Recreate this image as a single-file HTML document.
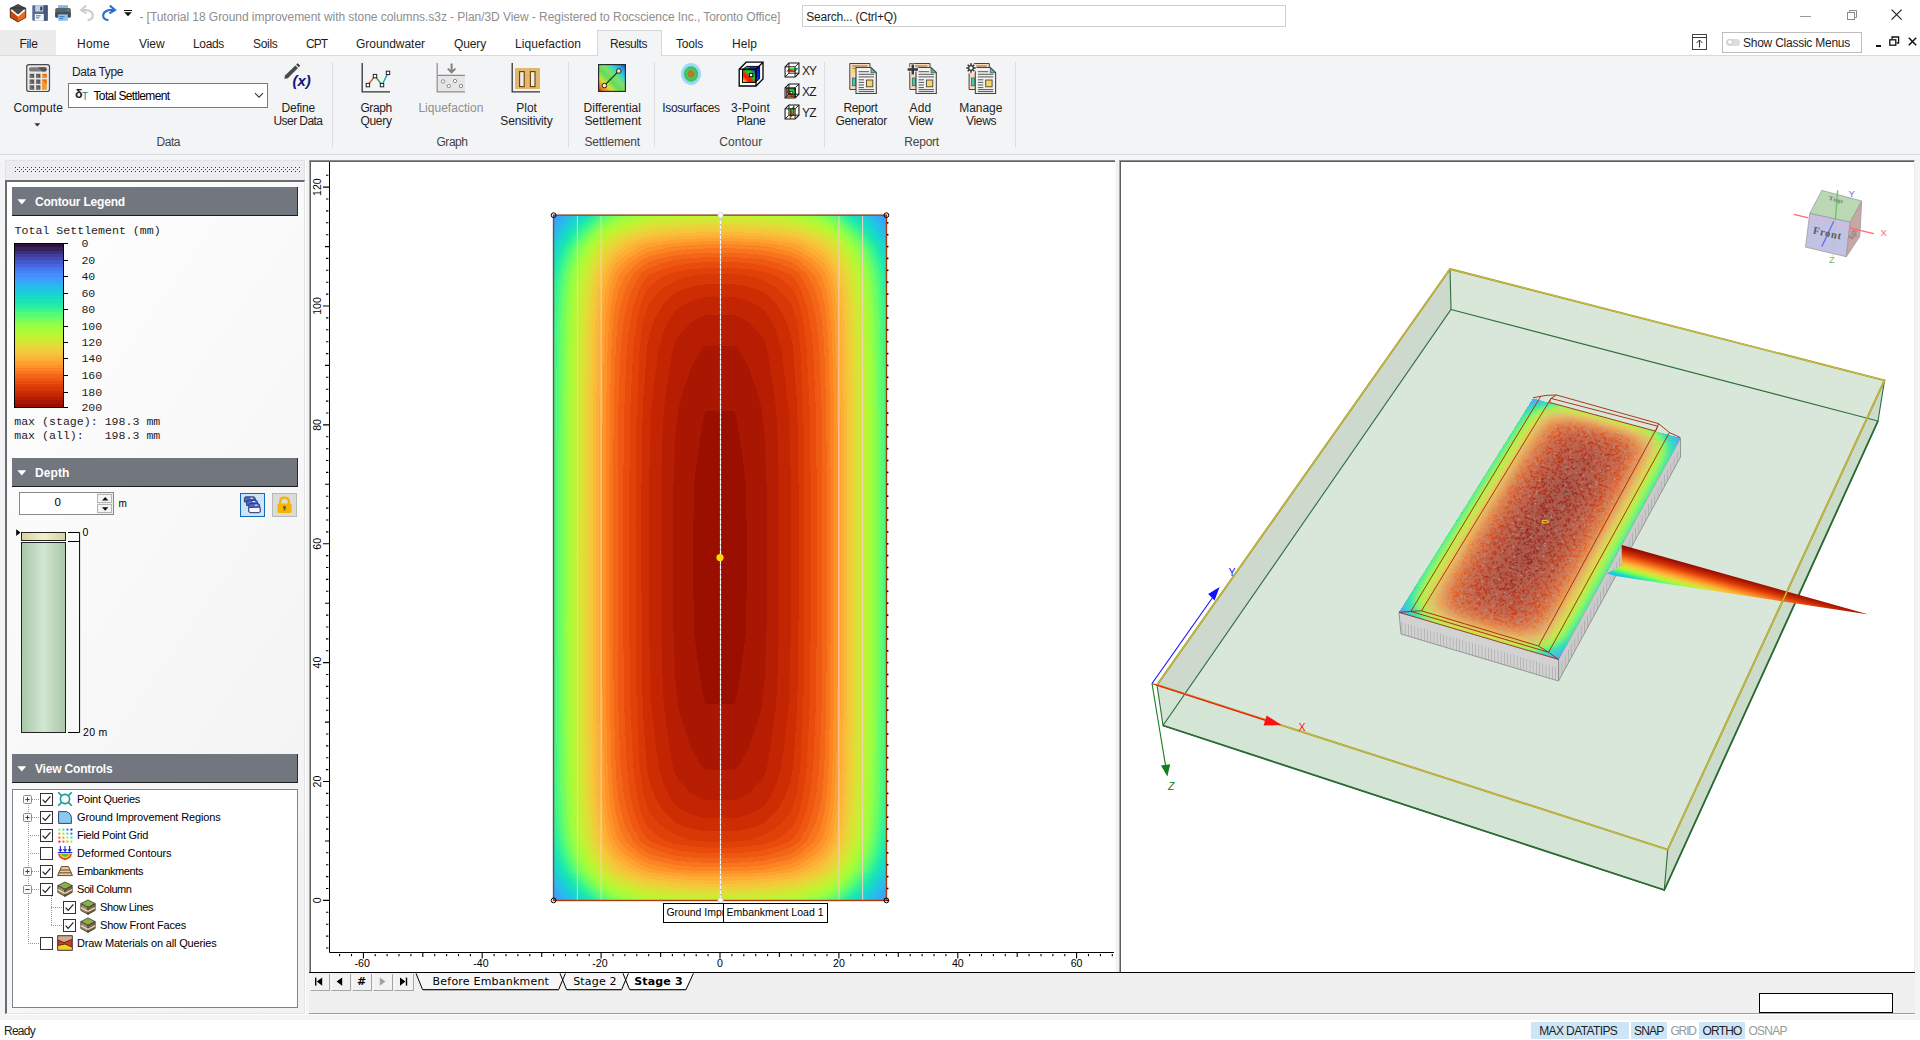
<!DOCTYPE html>
<html lang="en"><head><meta charset="utf-8"><title>Settle3 - Plan/3D View</title>
<style>
html,body{margin:0;padding:0;}
body{width:1920px;height:1040px;overflow:hidden;background:#f3f4f6;font-family:"Liberation Sans",sans-serif;font-size:12px;color:#1e1e1e;}
#app{position:relative;width:1920px;height:1040px;overflow:hidden;}
.b{position:absolute;box-sizing:border-box;}
.t{position:absolute;white-space:pre;line-height:1;}
svg{position:absolute;overflow:visible;}
.rb{font-size:12px;color:#1e1e1e;}
.gl{font-size:12px;color:#444;}
.mono{font-family:"Liberation Mono",monospace;font-size:11.6px;color:#1c1c1c;}
.tree{font-size:11px;color:#000;}
.ax{font-size:10.5px;color:#000;}
.stg{font-family:"DejaVu Sans",sans-serif;font-size:11px;color:#000;}
.hd{font-size:12px;font-weight:bold;color:#fff;}

</style></head>
<body>
<div id="app">
<div class="b " style="left:0px;top:0px;width:1920px;height:30px;background:#fff;"></div>
<svg style="left:8px;top:3px" width="20" height="20" viewBox="0 0 20 20">
<polygon points="10,1 17.8,5 17.8,14.5 10,19 2.2,14.5 2.2,5" fill="#3a3a3a"/>
<polygon points="2.2,5.6 10,12.6 10,19 2.2,14.5" fill="#c8480c"/>
<polygon points="17.8,5.6 10,12.6 10,19 17.8,14.5" fill="#ea6a1e"/>
<polygon points="2.6,6 10,1.4 17.4,6 10,10.6" fill="#4a4a4a"/>
<polyline points="3.2,6.8 10,12.6 16.8,6.8" fill="none" stroke="#fff" stroke-width="1.6"/>
<polygon points="2.2,5 2.2,14.5 10,19 17.8,14.5 17.8,5" fill="none" stroke="#222" stroke-width="0.6"/>
</svg>
<svg style="left:32px;top:5px" width="16" height="16" viewBox="0 0 16 16">
<rect x="0.3" y="0.3" width="15.4" height="15.4" rx="1" fill="#566a92"/>
<rect x="11.5" y="0.3" width="4.2" height="15.4" fill="#46567a"/>
<rect x="3.2" y="0.3" width="8" height="6.2" fill="#c4cfe6"/>
<rect x="8.3" y="1.6" width="2" height="3.8" fill="#2a3252"/>
<rect x="2.8" y="9" width="9" height="6.7" fill="#f4f7fc"/>
<rect x="4" y="10.3" width="4.6" height="1" fill="#566a92"/><rect x="4" y="12.3" width="3.4" height="1" fill="#566a92"/>
</svg>
<svg style="left:55px;top:5px" width="16" height="16" viewBox="0 0 16 16">
<rect x="3" y="0.2" width="10" height="4" fill="#7db8ee"/>
<rect x="0.2" y="3" width="15.6" height="9.5" rx="1.6" fill="#5f6368"/>
<rect x="0.2" y="7" width="15.6" height="5.5" rx="1.2" fill="#4a4e52"/>
<rect x="3.2" y="9.4" width="9.6" height="6.4" fill="#8cc4f4"/>
<rect x="4.4" y="11.2" width="5" height="0.9" fill="#2f6fb8"/><rect x="4.4" y="13.2" width="3.6" height="0.9" fill="#2f6fb8"/>
<circle cx="13.2" cy="4.8" r="0.9" fill="#22c55e"/>
</svg>
<svg style="left:79px;top:4px" width="17" height="18" viewBox="0 0 17 18">
<path d="M7.2 1.6 L2 6 L7.6 9.4 M2.4 6 C8 5.2 13.6 7 13.8 11.4 C13.9 14 11.8 15.8 8.6 16.2" fill="none" stroke="#cdcdcd" stroke-width="2.1"/>
</svg>
<svg style="left:100px;top:4px" width="17" height="18" viewBox="0 0 17 18">
<path d="M9.8 1.6 L15 6 L9.4 9.4 M14.6 6 C9 5.2 3.4 7 3.2 11.4 C3.1 14 5.2 15.8 8.4 16.2" fill="none" stroke="#2a6fc9" stroke-width="2.1"/>
</svg>
<div class="b " style="left:123.5px;top:9.5px;width:8px;height:1.3px;background:#111;"></div>
<svg style="left:123.5px;top:12px" width="8" height="5"><polygon points="0.2,0.3 7.8,0.3 4,4.2" fill="#111"/></svg>
<span id="t1" class="t " style="left:139.4px;top:11px;letter-spacing:-0.052px;color:#8e8e8e;font-size:12px;">- [Tutorial 18 Ground improvement with stone columns.s3z - Plan/3D View - Registered to Rocscience Inc., Toronto Office]</span>
<div class="b " style="left:802px;top:5px;width:484px;height:22px;background:#fff;border:1px solid #cfcfcf;"></div>
<span id="t2" class="t " style="left:806.2px;top:11px;letter-spacing:-0.214px;color:#1e1e1e;font-size:12px;">Search... (Ctrl+Q)</span>
<div class="b " style="left:1800px;top:15.5px;width:11px;height:1px;background:#9a9a9a;"></div>
<svg style="left:1847px;top:10px" width="11" height="11"><rect x="0.5" y="2.5" width="7" height="7" fill="none" stroke="#8a8a8a"/><path d="M2.5 2.5V0.5H9.5V7.5H7.5" fill="none" stroke="#8a8a8a"/></svg>
<svg style="left:1891px;top:9px" width="12" height="12"><path d="M0.6 0.6L10.6 10.6M10.6 0.6L0.6 10.6" stroke="#222" stroke-width="1.2"/></svg>
<div class="b " style="left:0px;top:30px;width:1920px;height:25px;background:#fff;"></div>
<div class="b " style="left:0px;top:30px;width:56px;height:25px;background:#ececec;"></div>
<div class="b " style="left:0px;top:55px;width:1920px;height:1px;background:#d9dadb;"></div>
<div class="b " style="left:597px;top:30px;width:65px;height:26px;background:#f3f4f6;border:1px solid #d5d6d9;border-bottom:none;"></div>
<span id="t3" class="t rb" style="left:19.5px;top:38px;letter-spacing:-0.336px;">File</span>
<span id="t4" class="t rb" style="left:77px;top:38px;letter-spacing:0.246px;">Home</span>
<span id="t5" class="t rb" style="left:139px;top:38px;letter-spacing:-0.074px;">View</span>
<span id="t6" class="t rb" style="left:193px;top:38px;letter-spacing:-0.341px;">Loads</span>
<span id="t7" class="t rb" style="left:253px;top:38px;letter-spacing:-0.303px;">Soils</span>
<span id="t8" class="t rb" style="left:306px;top:38px;letter-spacing:-1.000px;">CPT</span>
<span id="t9" class="t rb" style="left:356px;top:38px;letter-spacing:-0.034px;">Groundwater</span>
<span id="t10" class="t rb" style="left:454px;top:38px;letter-spacing:-0.138px;">Query</span>
<span id="t11" class="t rb" style="left:515px;top:38px;letter-spacing:0.107px;">Liquefaction</span>
<span id="t12" class="t rb" style="left:610px;top:38px;letter-spacing:-0.431px;">Results</span>
<span id="t13" class="t rb" style="left:676px;top:38px;letter-spacing:-0.203px;">Tools</span>
<span id="t14" class="t rb" style="left:732px;top:38px;letter-spacing:0.078px;">Help</span>
<svg style="left:1692px;top:34px" width="15" height="16"><rect x="0.5" y="0.5" width="14" height="15" fill="#fff" stroke="#444"/><path d="M0.5 3.5H14.5M7.5 13.4V6M4.6 9L7.5 6L10.4 9" fill="none" stroke="#333" stroke-width="1"/></svg>
<div class="b " style="left:1722px;top:32px;width:140px;height:21px;background:#fff;border:1px solid #bdbdbd;"></div>
<div class="b " style="left:1726px;top:38.5px;width:14px;height:7px;background:#dcdcdc;border-radius:4px;"></div>
<div class="b " style="left:1726.5px;top:39px;width:6px;height:6px;background:#fff;border-radius:3px;border:0.5px solid #c8c8c8;"></div>
<span id="t15" class="t rb" style="left:1743px;top:36.5px;letter-spacing:-0.243px;">Show Classic Menus</span>
<div class="b " style="left:1876px;top:45px;width:5px;height:2px;background:#111;"></div>
<svg style="left:1889px;top:36px" width="11" height="11"><rect x="0.8" y="3.8" width="6" height="5.4" fill="#fff" stroke="#111" stroke-width="1.3"/><path d="M3 3V1H9.6V7H7.6" fill="none" stroke="#111" stroke-width="1.3"/></svg>
<svg style="left:1908px;top:37px" width="9" height="9"><path d="M0.8 0.8L8.2 8.2M8.2 0.8L0.8 8.2" stroke="#111" stroke-width="1.5"/></svg>
<div class="b " style="left:0px;top:56px;width:1920px;height:104px;background:#f3f4f6;"></div>
<div class="b " style="left:0px;top:154px;width:1920px;height:1px;background:#d9dadd;"></div>
<svg style="left:26px;top:64px" width="24" height="28" viewBox="0 0 24 28">
<rect x="0.7" y="0.6" width="22.8" height="26.9" rx="2.2" fill="#e8e8e8" stroke="#4a4a4a" stroke-width="1.2"/>
<rect x="3" y="3.2" width="17.7" height="4.3" rx="1.8" fill="#7a7a7a"/><path d="M12 3.2H18.9Q20.7 3.2 20.7 5.3Q20.7 7.5 18.9 7.5H16.4Z" fill="#565656"/>
<g fill="#585858"><rect x="3.7" y="9.8" width="4.5" height="4.2"/><rect x="10" y="9.8" width="4.4" height="4.2"/><rect x="3.7" y="15.5" width="4.5" height="4.5"/><rect x="10" y="15.5" width="4.4" height="4.5"/><rect x="3.7" y="21.3" width="4.5" height="4.5"/><rect x="10" y="21.3" width="4.4" height="4.5"/></g>
<g fill="#8a8a8a" opacity="0.55"><polygon points="3.7,9.8 8.2,14 3.7,14"/><polygon points="10,9.8 14.4,14 10,14"/><polygon points="3.7,15.5 8.2,20 3.7,20"/><polygon points="10,15.5 14.4,20 10,20"/><polygon points="3.7,21.3 8.2,25.8 3.7,25.8"/><polygon points="10,21.3 14.4,25.8 10,25.8"/></g>
<rect x="16" y="9.8" width="4.7" height="4.2" fill="#e86a18"/><polygon points="16,9.8 20.7,14 16,14" fill="#f59a23"/>
<rect x="16" y="15.5" width="4.7" height="10.3" fill="#f59a2c"/><polygon points="16,15.5 20.7,15.5 20.7,20" fill="#e86a18"/>
</svg>
<span id="t16" class="t rb" style="left:13.5px;top:102px;letter-spacing:0.114px;">Compute</span>
<svg style="left:33.5px;top:123px" width="7" height="4"><polygon points="0.3,0.2 6.3,0.2 3.3,3.4" fill="#333"/></svg>
<span id="t17" class="t rb" style="left:72px;top:66px;letter-spacing:-0.387px;">Data Type</span>
<div class="b " style="left:68px;top:83px;width:200px;height:25px;background:#fff;border:1px solid #7a7a7a;"></div>
<span id="t18" class="t rb" style="left:75px;top:88px;font-size:12.5px;font-weight:bold;color:#222;">δ</span>
<span id="t19" class="t rb" style="left:82px;top:92px;font-size:10px;color:#168888;">T</span>
<span id="t20" class="t rb" style="left:93.5px;top:90px;letter-spacing:-0.628px;color:#000;">Total Settlement</span>
<svg style="left:254px;top:92px" width="10" height="7"><polyline points="1,1.2 5,5.2 9,1.2" fill="none" stroke="#333" stroke-width="1.1"/></svg>
<svg style="left:283px;top:62px" width="30" height="28" viewBox="0 0 30 28">
<polygon points="2,13.6 12.4,3.4 15,6 4.8,16.2 1.4,17" fill="#4a4a4a"/><polygon points="13.2,2.6 14.6,1.2 17.2,3.8 15.8,5.2" fill="#333"/>
<text x="9.5" y="24" font-family="Liberation Sans, sans-serif" font-style="italic" font-weight="bold" font-size="15" fill="#14147a">(x)</text>
</svg>
<span id="t21" class="t rb" style="left:281.6px;top:102px;letter-spacing:-0.215px;">Define</span>
<span id="t22" class="t rb" style="left:273.5px;top:115px;letter-spacing:-0.559px;">User Data</span>
<span id="t23" class="t gl" style="left:156.5px;top:136px;letter-spacing:-0.465px;">Data</span>
<div class="b " style="left:332px;top:62px;width:1px;height:85px;background:#dcdddf;"></div>
<svg style="left:361px;top:62px" width="30" height="31" viewBox="0 0 30 31">
<path d="M1.2 1V29.8H29" fill="none" stroke="#333" stroke-width="1.3"/>
<path d="M7 23L14 14" stroke="#e4572e" stroke-width="1.4"/><path d="M14 14L21 23" stroke="#2ea84f" stroke-width="1.4"/><path d="M21 23L27 11" stroke="#1f9bb0" stroke-width="1.4"/>
<g fill="#fff" stroke="#222" stroke-width="1"><rect x="5.2" y="21.4" width="3.4" height="3.4"/><rect x="12.3" y="12.4" width="3.4" height="3.4"/><rect x="19.3" y="21.4" width="3.4" height="3.4"/><rect x="25.3" y="9.2" width="3.4" height="3.4"/></g>
</svg>
<span id="t24" class="t rb" style="left:360.4px;top:102px;letter-spacing:-0.412px;">Graph</span>
<span id="t25" class="t rb" style="left:360.4px;top:115px;letter-spacing:-0.277px;">Query</span>
<svg style="left:436px;top:62px" width="30" height="31" viewBox="0 0 30 31">
<rect x="2" y="13.4" width="27" height="16" fill="#e6e6e6"/>
<path d="M1.2 1V29.8H29M2 13.4H29" fill="none" stroke="#8c8c8c" stroke-width="1.2"/>
<path d="M15.6 1.6V9.6M11.8 6.6L15.6 10.4L19.4 6.6" fill="none" stroke="#808080" stroke-width="1.9"/>
<g fill="#fff" stroke="#8c8c8c" stroke-width="1"><circle cx="7" cy="19.4" r="1.7"/><circle cx="19" cy="19" r="1.7"/><circle cx="12.8" cy="24" r="1.7"/><circle cx="25" cy="24" r="1.7"/></g>
</svg>
<span id="t26" class="t rb" style="left:418.4px;top:102px;letter-spacing:0.023px;color:#8f8f8f;">Liquefaction</span>
<svg style="left:511px;top:62px" width="30" height="31" viewBox="0 0 30 31">
<rect x="4" y="6" width="25" height="21" fill="#e3b76b"/>
<path d="M1.2 1V29.8H29" fill="none" stroke="#333" stroke-width="1.3"/>
<rect x="8.6" y="9.6" width="4.6" height="15" fill="#ececec" stroke="#6b3e0a" stroke-width="1.1"/><rect x="19.4" y="9.6" width="4.6" height="15" fill="#ececec" stroke="#6b3e0a" stroke-width="1.1"/>
</svg>
<span id="t27" class="t rb" style="left:516.2px;top:102px;letter-spacing:0.028px;">Plot</span>
<span id="t28" class="t rb" style="left:500.3px;top:115px;letter-spacing:-0.166px;">Sensitivity</span>
<span id="t29" class="t gl" style="left:436.5px;top:136px;letter-spacing:-0.472px;">Graph</span>
<div class="b " style="left:568px;top:62px;width:1px;height:85px;background:#dcdddf;"></div>
<svg style="left:598px;top:64px" width="28" height="28" viewBox="0 0 28 28">
<defs><linearGradient id="dsg" x1="0" y1="1" x2="1" y2="0"><stop offset="0" stop-color="#b82010"/><stop offset="0.13" stop-color="#f08a1c"/><stop offset="0.27" stop-color="#cfe03a"/><stop offset="0.42" stop-color="#5fdc5a"/><stop offset="0.58" stop-color="#7fe06a"/><stop offset="0.72" stop-color="#30d8c8"/><stop offset="0.86" stop-color="#2aa0f0"/><stop offset="1" stop-color="#1c3cc0"/></linearGradient></defs>
<rect x="0.6" y="0.6" width="26.8" height="26.8" fill="url(#dsg)" stroke="#222" stroke-width="1.1"/>
<path d="M6.6 21.4L20.6 7.2" stroke="#222" stroke-width="1.2"/>
<circle cx="6.4" cy="21.6" r="2.3" fill="#ffe9a8" stroke="#222" stroke-width="1"/><circle cx="20.8" cy="7" r="2.3" fill="#ffe9a8" stroke="#222" stroke-width="1"/>
</svg>
<span id="t30" class="t rb" style="left:583.5px;top:102px;letter-spacing:0.030px;">Differential</span>
<span id="t31" class="t rb" style="left:584.4px;top:115px;letter-spacing:-0.077px;">Settlement</span>
<span id="t32" class="t gl" style="left:584.4px;top:136px;letter-spacing:-0.177px;">Settlement</span>
<div class="b " style="left:654px;top:62px;width:1px;height:85px;background:#dcdddf;"></div>
<svg style="left:680px;top:62px" width="22" height="24" viewBox="0 0 22 24">
<defs><radialGradient id="iso"><stop offset="0" stop-color="#b47a2e"/><stop offset="0.3" stop-color="#b07c30"/><stop offset="0.4" stop-color="#4ccc68"/><stop offset="0.5" stop-color="#3cc45c"/><stop offset="0.63" stop-color="#3cc45c"/><stop offset="0.72" stop-color="#9ad6f8"/><stop offset="0.93" stop-color="#a4dafa"/><stop offset="1" stop-color="#a4dafa" stop-opacity="0"/></radialGradient></defs>
<ellipse cx="11" cy="12" rx="10.4" ry="11.4" fill="url(#iso)"/></svg>
<span id="t33" class="t rb" style="left:662.3px;top:102px;letter-spacing:-0.360px;">Isosurfaces</span>
<svg style="left:738px;top:61px" width="26" height="26" viewBox="0 0 26 26">
<defs><linearGradient id="pp" x1="0" y1="1" x2="1" y2="0"><stop offset="0.04" stop-color="#ffff00"/><stop offset="0.3" stop-color="#ff1800"/><stop offset="0.42" stop-color="#ff1800"/><stop offset="0.6" stop-color="#10e020"/><stop offset="0.75" stop-color="#10d030"/><stop offset="1" stop-color="#1020ff"/></linearGradient>
<linearGradient id="pq" x1="0" y1="1" x2="0.4" y2="0"><stop offset="0" stop-color="#20c030"/><stop offset="0.35" stop-color="#1030f0"/><stop offset="1" stop-color="#0818c0"/></linearGradient></defs>
<path d="M1.2 8.2L8.2 1.2H25V18L18 25H1.2Z" fill="#fff" stroke="#000" stroke-width="1.3"/>
<polygon points="4.5,8.7 8.6,5.4 21.6,5.4 17.4,8.7" fill="#1428e8"/><polygon points="4.5,8.7 8.6,5.4 13,5.4 9,8.7" fill="#18b838"/>
<polygon points="17.4,8.7 21.6,5.4 21.6,17.8 17.4,21.4" fill="url(#pq)"/>
<rect x="4.5" y="8.7" width="12.9" height="12.7" fill="url(#pp)" stroke="#000" stroke-width="1"/>
<path d="M4.5 8.7L8.6 5.4H21.6V17.8L17.4 21.4M17.4 8.7L21.6 5.4" fill="none" stroke="#000" stroke-width="0.9"/>
<path d="M1.2 8.2H18V25M18 8.2L25 1.2" fill="none" stroke="#000" stroke-width="1.3"/>
<rect x="11.4" y="12.4" width="3.4" height="3.3" fill="#fff" stroke="#000" stroke-width="1"/>
</svg>
<span id="t34" class="t rb" style="left:731.1px;top:102px;letter-spacing:0.138px;">3-Point</span>
<span id="t35" class="t rb" style="left:736.5px;top:115px;letter-spacing:-0.401px;">Plane</span>
<svg style="left:784px;top:62px" width="16" height="16" viewBox="0 0 16 16.6"><path d="M0.8 5L4.8 1H15.2V11.6L11.2 15.6H0.8Z" fill="#fff" stroke="#111" stroke-width="1.1"/><polygon points="1.5,10.5 5.5,6.5 15,6.5 11,10.5" fill="url(#pp)"/><path d="M0.8 5H11.2V15.6M11.2 5L15.2 1M4.8 1V11.6H15.2M4.8 11.6L0.8 15.6" fill="none" stroke="#111" stroke-width="1"/></svg>
<svg style="left:784px;top:83px" width="16" height="16" viewBox="0 0 16 16.6"><path d="M0.8 5L4.8 1H15.2V11.6L11.2 15.6H0.8Z" fill="#fff" stroke="#111" stroke-width="1.1"/><rect x="2.4" y="5.8" width="9.4" height="8.6" fill="url(#pp)" stroke="#111" stroke-width="0.7"/><rect x="6" y="9" width="2.2" height="2.2" fill="#fff" stroke="#111" stroke-width="0.6"/><path d="M0.8 5H11.2V15.6M11.2 5L15.2 1M4.8 1V11.6H15.2M4.8 11.6L0.8 15.6" fill="none" stroke="#111" stroke-width="1"/></svg>
<svg style="left:784px;top:104px" width="16" height="16" viewBox="0 0 16 16.6"><path d="M0.8 5L4.8 1H15.2V11.6L11.2 15.6H0.8Z" fill="#fff" stroke="#111" stroke-width="1.1"/><polygon points="6.2,5.6 10,2 10,11 6.2,15" fill="url(#pp)"/><path d="M6.2 5V15.4M10 1.6V11.4" stroke="#111" stroke-width="0.8"/><path d="M0.8 5H11.2V15.6M11.2 5L15.2 1M4.8 1V11.6H15.2M4.8 11.6L0.8 15.6" fill="none" stroke="#111" stroke-width="1"/></svg>
<span id="t36" class="t rb" style="left:802px;top:65px;letter-spacing:-1.108px;">XY</span>
<span id="t37" class="t rb" style="left:802px;top:86px;letter-spacing:-0.772px;">XZ</span>
<span id="t38" class="t rb" style="left:802px;top:107px;letter-spacing:-0.772px;">YZ</span>
<span id="t39" class="t gl" style="left:719.3px;top:136px;letter-spacing:0.028px;">Contour</span>
<div class="b " style="left:824px;top:62px;width:1px;height:85px;background:#dcdddf;"></div>
<svg style="left:848.5px;top:63px" width="32" height="31" viewBox="0 0 32 31"><path d="M0.8 0.5H21.0V26.5H0.8Z" fill="#f8d9ba" stroke="#444" stroke-width="1"/><path d="M3.2 3H18.4M3.2 5.4H18.4" stroke="#7a5a3a" stroke-width="0.9"/><rect x="3.4" y="5.6" width="3.2" height="4" fill="#fbd45a"/><rect x="3.3" y="15" width="3.4" height="7.8" fill="#45c8a8" stroke="#3a5a52" stroke-width="0.7"/><path d="M7.0 4.5H22.0L27.3 9.6V30.5H7.0Z" fill="#f2f2f2" stroke="#444" stroke-width="1.1"/><polygon points="22.0,4.9 27.0,9.8 22.0,9.8" fill="#45c8a8" stroke="#444" stroke-width="0.7"/><path d="M9.6 8.7H20.0M9.6 11.3H25.0M9.6 13.9H25.0M9.6 16.8H15.0M9.6 19.4H15.0M9.6 22H15.0M9.6 24.6H15.0M9.6 26.6H25.0M9.6 28.6H25.0" stroke="#444" stroke-width="0.9"/><rect x="17.4" y="17" width="6.4" height="6.8" fill="#fbd45a" stroke="#444" stroke-width="0.9"/></svg>
<svg style="left:906.5px;top:63px" width="32" height="31" viewBox="0 0 32 31"><path d="M2.8 0.5H23.0V26.5H2.8Z" fill="#f8d9ba" stroke="#444" stroke-width="1"/><path d="M5.2 3H20.4M5.2 5.4H20.4" stroke="#7a5a3a" stroke-width="0.9"/><rect x="5.4" y="5.6" width="3.2" height="4" fill="#fbd45a"/><rect x="5.3" y="15" width="3.4" height="7.8" fill="#45c8a8" stroke="#3a5a52" stroke-width="0.7"/><path d="M9.0 4.5H24.0L29.3 9.6V30.5H9.0Z" fill="#f2f2f2" stroke="#444" stroke-width="1.1"/><polygon points="24.0,4.9 29.0,9.8 24.0,9.8" fill="#45c8a8" stroke="#444" stroke-width="0.7"/><path d="M11.6 8.7H22.0M11.6 11.3H27.0M11.6 13.9H27.0M11.6 16.8H17.0M11.6 19.4H17.0M11.6 22H17.0M11.6 24.6H17.0M11.6 26.6H27.0M11.6 28.6H27.0" stroke="#444" stroke-width="0.9"/><rect x="19.4" y="17" width="6.4" height="6.8" fill="#fbd45a" stroke="#444" stroke-width="0.9"/><path d="M5.8 0.8V12M0.2 6.4H11.4" stroke="#f3f4f6" stroke-width="4.4"/><path d="M5.8 1.4V11.4M0.6 6.4H11" stroke="#38383f" stroke-width="2.5"/></svg>
<svg style="left:966px;top:63px" width="32" height="31" viewBox="0 0 32 31"><path d="M3.1 0.5H23.3V26.5H3.1Z" fill="#f8d9ba" stroke="#444" stroke-width="1"/><path d="M5.5 3H20.7M5.5 5.4H20.7" stroke="#7a5a3a" stroke-width="0.9"/><rect x="5.7" y="5.6" width="3.2" height="4" fill="#fbd45a"/><rect x="5.6" y="15" width="3.4" height="7.8" fill="#45c8a8" stroke="#3a5a52" stroke-width="0.7"/><path d="M9.3 4.5H24.3L29.6 9.6V30.5H9.3Z" fill="#f2f2f2" stroke="#444" stroke-width="1.1"/><polygon points="24.3,4.9 29.3,9.8 24.3,9.8" fill="#45c8a8" stroke="#444" stroke-width="0.7"/><path d="M11.9 8.7H22.3M11.9 11.3H27.3M11.9 13.9H27.3M11.9 16.8H17.3M11.9 19.4H17.3M11.9 22H17.3M11.9 24.6H17.3M11.9 26.6H27.3M11.9 28.6H27.3" stroke="#444" stroke-width="0.9"/><rect x="19.7" y="17" width="6.4" height="6.8" fill="#fbd45a" stroke="#444" stroke-width="0.9"/><circle cx="5" cy="5" r="5.6" fill="#f3f4f6"/><path d="M5 0.3V9.7M0.3 5H9.7M1.7 1.7L8.3 8.3M8.3 1.7L1.7 8.3" stroke="#2a2a2a" stroke-width="1.5"/><circle cx="5" cy="5" r="2.7" fill="#2a2a2a"/><circle cx="5" cy="5" r="1.7" fill="#fff"/></svg>
<span id="t40" class="t rb" style="left:843.4px;top:102px;letter-spacing:-0.305px;">Report</span>
<span id="t41" class="t rb" style="left:835.4px;top:115px;letter-spacing:-0.281px;">Generator</span>
<span id="t42" class="t rb" style="left:909.6px;top:102px;letter-spacing:0.147px;">Add</span>
<span id="t43" class="t rb" style="left:908.3px;top:115px;letter-spacing:-0.274px;">View</span>
<span id="t44" class="t rb" style="left:959.3px;top:102px;letter-spacing:-0.062px;">Manage</span>
<span id="t45" class="t rb" style="left:966px;top:115px;letter-spacing:-0.299px;">Views</span>
<span id="t46" class="t gl" style="left:904.3px;top:136px;letter-spacing:-0.222px;">Report</span>
<div class="b " style="left:1015px;top:62px;width:1px;height:85px;background:#dcdddf;"></div>
<div class="b " style="left:5px;top:160px;width:300px;height:21px;background:#ededef;border:1px solid #e2e2e5;border-bottom:none;"></div>
<svg style="left:15px;top:167px" width="286" height="6"><defs><pattern id="grp" width="4" height="4" patternUnits="userSpaceOnUse"><rect x="0" y="0" width="1" height="1" fill="#3a3a3a"/><rect x="1" y="1" width="1" height="1" fill="#fff"/><rect x="2" y="2" width="1" height="1" fill="#3a3a3a"/><rect x="3" y="3" width="1" height="1" fill="#fff"/></pattern></defs><rect width="286" height="6" fill="url(#grp)" shape-rendering="crispEdges"/></svg>
<div class="b " style="left:5px;top:180px;width:300px;height:834px;background:linear-gradient(125deg,#ffffff 0%,#fafafa 35%,#f1f1f1 100%);border-top:2px solid #6c6c6c;border-left:2px solid #6c6c6c;border-right:1px solid #e4e4e4;border-bottom:1px solid #e4e4e4;"></div>
<div class="b " style="left:305px;top:160px;width:1px;height:855px;background:#fff;"></div>
<div class="b " style="left:5px;top:1014px;width:301px;height:1px;background:#fff;"></div>
<div class="b " style="left:12px;top:187px;width:286px;height:28.5px;background:#72767e;border-bottom:1.5px solid #1c1c1c;border-right:1.2px solid #2a2a2a;"></div>
<svg style="left:17px;top:198.5px" width="10" height="6"><polygon points="0.4,0.2 9.2,0.2 4.8,5.4" fill="#fff"/></svg>
<span id="t47" class="t hd" style="left:35px;top:196px;letter-spacing:-0.190px;">Contour Legend</span>
<span id="t48" class="t mono" style="left:14.6px;top:225.4px;">Total Settlement (mm)</span>
<div class="b " style="left:14px;top:243px;width:49.5px;height:165px;border:1px solid #000;background:linear-gradient(to bottom,#30123b 0.000% 2.000%,#36215f 2.000% 4.000%,#3b2f80 4.000% 6.000%,#3f3e9c 6.000% 8.000%,#424bb5 8.000% 10.000%,#4559cb 10.000% 12.000%,#4666dd 12.000% 14.000%,#4773eb 14.000% 16.000%,#4680f6 16.000% 18.000%,#458cfd 18.000% 20.000%,#4099ff 20.000% 22.000%,#38a5fb 22.000% 24.000%,#2fb2f4 24.000% 26.000%,#27bee9 26.000% 28.000%,#1fc9dd 28.000% 30.000%,#1ad4d0 30.000% 32.000%,#18ddc2 32.000% 34.000%,#1ae4b6 34.000% 36.000%,#22ebaa 36.000% 38.000%,#2ff19b 38.000% 40.000%,#3ff68a 40.000% 42.000%,#52fa7a 42.000% 44.000%,#65fd69 44.000% 46.000%,#79fe59 46.000% 48.000%,#8bff4b 48.000% 50.000%,#9cfe40 50.000% 52.000%,#a9fb39 52.000% 54.000%,#b7f735 54.000% 56.000%,#c3f134 56.000% 58.000%,#d0ea34 58.000% 60.000%,#dbe236 60.000% 62.000%,#e5d938 62.000% 64.000%,#eecf3a 64.000% 66.000%,#f5c53a 66.000% 68.000%,#faba39 68.000% 70.000%,#fdae35 70.000% 72.000%,#fea130 72.000% 74.000%,#fe932a 74.000% 76.000%,#fc8423 76.000% 78.000%,#f9751d 78.000% 80.000%,#f46617 80.000% 82.000%,#ef5811 82.000% 84.000%,#e84b0c 84.000% 86.000%,#e14109 86.000% 88.000%,#d83706 88.000% 90.000%,#ce2d04 90.000% 92.000%,#c32503 92.000% 94.000%,#b71d02 94.000% 96.000%,#a91601 96.000% 98.000%,#9b0f01 98.000% 100.000%);"></div>
<div class="b " style="left:63px;top:243px;width:5.2px;height:1.2px;background:#000;"></div>
<span id="t49" class="t mono" style="left:81.4px;top:238.4px;">0</span>
<div class="b " style="left:63px;top:260px;width:5.2px;height:1.2px;background:#000;"></div>
<span id="t50" class="t mono" style="left:81.4px;top:255.4px;">20</span>
<div class="b " style="left:63px;top:276px;width:5.2px;height:1.2px;background:#000;"></div>
<span id="t51" class="t mono" style="left:81.4px;top:271.4px;">40</span>
<div class="b " style="left:63px;top:293px;width:5.2px;height:1.2px;background:#000;"></div>
<span id="t52" class="t mono" style="left:81.4px;top:288.4px;">60</span>
<div class="b " style="left:63px;top:309px;width:5.2px;height:1.2px;background:#000;"></div>
<span id="t53" class="t mono" style="left:81.4px;top:304.4px;">80</span>
<div class="b " style="left:63px;top:326px;width:5.2px;height:1.2px;background:#000;"></div>
<span id="t54" class="t mono" style="left:81.4px;top:321.4px;">100</span>
<div class="b " style="left:63px;top:342px;width:5.2px;height:1.2px;background:#000;"></div>
<span id="t55" class="t mono" style="left:81.4px;top:337.4px;">120</span>
<div class="b " style="left:63px;top:358px;width:5.2px;height:1.2px;background:#000;"></div>
<span id="t56" class="t mono" style="left:81.4px;top:353.4px;">140</span>
<div class="b " style="left:63px;top:375px;width:5.2px;height:1.2px;background:#000;"></div>
<span id="t57" class="t mono" style="left:81.4px;top:370.4px;">160</span>
<div class="b " style="left:63px;top:392px;width:5.2px;height:1.2px;background:#000;"></div>
<span id="t58" class="t mono" style="left:81.4px;top:387.4px;">180</span>
<div class="b " style="left:63px;top:407px;width:5.2px;height:1.2px;background:#000;"></div>
<span id="t59" class="t mono" style="left:81.4px;top:402.4px;">200</span>
<span id="t60" class="t mono" style="left:14.2px;top:416.4px;">max (stage): 198.3 mm</span>
<span id="t61" class="t mono" style="left:14.2px;top:430.4px;">max (all):   198.3 mm</span>
<div class="b " style="left:12px;top:458px;width:286px;height:28.5px;background:#72767e;border-bottom:1.5px solid #1c1c1c;border-right:1.2px solid #2a2a2a;"></div>
<svg style="left:17px;top:469.5px" width="10" height="6"><polygon points="0.4,0.2 9.2,0.2 4.8,5.4" fill="#fff"/></svg>
<span id="t62" class="t hd" style="left:35px;top:467px;letter-spacing:0.100px;">Depth</span>
<div class="b " style="left:19px;top:492px;width:95px;height:23px;background:#fff;border:1px solid #8a8a8a;"></div>
<div class="b " style="left:96.5px;top:493px;width:16.5px;height:21px;background:#ececec;"></div>
<div class="b " style="left:97.2px;top:494px;width:15px;height:8.6px;background:#f4f4f4;border:1px solid #b4b4b4;"></div>
<div class="b " style="left:97.2px;top:504.2px;width:15px;height:8.6px;background:#f4f4f4;border:1px solid #b4b4b4;"></div>
<svg style="left:101.5px;top:496.6px" width="7" height="4"><polygon points="3.2,0 6.4,3.6 0,3.6" fill="#111"/></svg>
<svg style="left:101.5px;top:506.8px" width="7" height="4"><polygon points="0,0.2 6.4,0.2 3.2,3.8" fill="#111"/></svg>
<span id="t63" class="t tree" style="left:54.6px;top:496.6px;font-size:11.5px;">0</span>
<span id="t64" class="t tree" style="left:118.6px;top:499.4px;font-size:10px;">m</span>
<div class="b " style="left:240px;top:493px;width:25px;height:24px;background:#cce4f7;border:1.4px solid #1668b8;"></div>
<svg style="left:243px;top:496px" width="19" height="18" viewBox="0 0 19 18">
<g stroke="#2a3a6a" stroke-width="0.9"><path d="M1.4 2.4Q1.4 0.8 3 0.8H10.4Q12 0.8 12.2 2.4L12.6 6H1.4Z" fill="#4a66c8"/><path d="M3.6 5.8Q3.6 4.2 5.2 4.2H12.6Q14.2 4.2 14.4 5.8L14.8 9.6H3.6Z" fill="#4a66c8"/><path d="M5.8 9.4Q5.8 7.6 7.4 7.6H14.8Q16.4 7.6 16.6 9.4L17.2 15Q17.2 16.6 15.6 16.6H7.4Q5.8 16.6 5.8 15Z" fill="#4a66c8"/><path d="M5.8 11.6L17 11.2L17.2 15Q17.2 16.6 15.6 16.6H7.4Q5.8 16.6 5.8 15Z" fill="#f4f6fb"/></g>
<path d="M7.4 2.2H10M9.6 5.6H12.2M11.8 9.2H14.6" stroke="#fff" stroke-width="1"/></svg>
<div class="b " style="left:272px;top:493px;width:25px;height:24px;background:#dbdbdb;border:1px solid #b8b8b8;"></div>
<svg style="left:276px;top:496px" width="17" height="18" viewBox="0 0 17 18">
<path d="M4.2 8V5.4Q4.2 1.6 8.5 1.6Q12.8 1.6 12.8 5.4V8" fill="none" stroke="#f2b400" stroke-width="2.4"/>
<rect x="1.4" y="7.4" width="14.2" height="9.6" rx="1.6" fill="#f7b500"/>
<circle cx="8.5" cy="11.2" r="1.5" fill="#6a5a4a"/><rect x="7.8" y="11.6" width="1.4" height="3" fill="#6a5a4a"/></svg>
<svg style="left:16px;top:529px" width="5" height="8"><polygon points="0.2,0.2 4.4,3.6 0.2,7" fill="#000"/></svg>
<div class="b " style="left:21px;top:532px;width:45px;height:9.2px;border:1px solid #222;background:linear-gradient(to right,#d6d2a0,#f2f0cc 50%,#d6d2a0);"></div>
<div class="b " style="left:21px;top:542px;width:45px;height:191px;border:1px solid #222;background:linear-gradient(to right,#a9c8a9,#d2e6d2 50%,#a9c8a9);"></div>
<svg style="left:66px;top:531px" width="16" height="204"><path d="M2 1.5H13.6V201.5H2M2 10.5H13.6" fill="none" stroke="#000" stroke-width="1"/></svg>
<span id="t65" class="t tree" style="left:82.6px;top:527.4px;font-size:10.5px;">0</span>
<span id="t66" class="t tree" style="left:83px;top:727.2px;letter-spacing:0.289px;font-size:10.5px;">20 m</span>
<div class="b " style="left:12px;top:754px;width:286px;height:28.5px;background:#72767e;border-bottom:1.5px solid #1c1c1c;border-right:1.2px solid #2a2a2a;"></div>
<svg style="left:17px;top:765.5px" width="10" height="6"><polygon points="0.4,0.2 9.2,0.2 4.8,5.4" fill="#fff"/></svg>
<span id="t67" class="t hd" style="left:35px;top:763px;letter-spacing:-0.177px;">View Controls</span>
<div class="b " style="left:12px;top:788.5px;width:286px;height:219.5px;background:#fff;border:1px solid #7f848c;"></div>
<div class="b " style="left:27.5px;top:805px;width:1px;height:138px;background-image:linear-gradient(to bottom,#9a9a9a 1px,transparent 1px);background-size:1px 2px;"></div>
<div class="b " style="left:50.5px;top:896px;width:1px;height:29px;background-image:linear-gradient(to bottom,#9a9a9a 1px,transparent 1px);background-size:1px 2px;"></div>
<div class="b " style="left:28px;top:799px;width:12px;height:1px;background-image:linear-gradient(to right,#9a9a9a 1px,transparent 1px);background-size:2px 1px;"></div>
<svg style="left:23px;top:795.1999999999999px" width="9" height="9"><rect x="0.5" y="0.5" width="8" height="8" rx="1" fill="#fafafa" stroke="#8a8a8a"/><path d="M2.4 4.5H6.6M4.5 2.4V6.6" stroke="#2a3aa0" stroke-width="1"/></svg>
<svg style="left:40px;top:792.8px" width="13" height="13"><rect x="0.5" y="0.5" width="12" height="12" fill="#fff" stroke="#333"/><path d="M2.6 6.6L5.2 9.4L10.4 3.4" fill="none" stroke="#222" stroke-width="1.2"/></svg>
<svg style="left:57px;top:791.0px" width="16" height="16" viewBox="0 0 16 16"><circle cx="8" cy="8" r="4.6" fill="none" stroke="#1a9a9a" stroke-width="1.6"/><path d="M1.2 1.2L4.6 4.6M14.8 1.2L11.4 4.6M1.2 14.8L4.6 11.4M14.8 14.8L11.4 11.4" stroke="#1a9a9a" stroke-width="1.6"/></svg>
<span id="t68" class="t tree" style="left:77px;top:793.6px;letter-spacing:-0.281px;">Point Queries</span>
<div class="b " style="left:28px;top:817px;width:12px;height:1px;background-image:linear-gradient(to right,#9a9a9a 1px,transparent 1px);background-size:2px 1px;"></div>
<svg style="left:23px;top:813.1999999999999px" width="9" height="9"><rect x="0.5" y="0.5" width="8" height="8" rx="1" fill="#fafafa" stroke="#8a8a8a"/><path d="M2.4 4.5H6.6M4.5 2.4V6.6" stroke="#2a3aa0" stroke-width="1"/></svg>
<svg style="left:40px;top:810.8px" width="13" height="13"><rect x="0.5" y="0.5" width="12" height="12" fill="#fff" stroke="#333"/><path d="M2.6 6.6L5.2 9.4L10.4 3.4" fill="none" stroke="#222" stroke-width="1.2"/></svg>
<svg style="left:57px;top:809.0px" width="16" height="16" viewBox="0 0 16 16"><path d="M1.6 2.6H9.4Q14.4 4.4 14.4 9.4V14.4H1.6Z" fill="#8cc8f0" stroke="#2a4a6a" stroke-width="1"/></svg>
<span id="t69" class="t tree" style="left:77px;top:811.6px;letter-spacing:-0.148px;">Ground Improvement Regions</span>
<div class="b " style="left:28px;top:835px;width:12px;height:1px;background-image:linear-gradient(to right,#9a9a9a 1px,transparent 1px);background-size:2px 1px;"></div>
<svg style="left:40px;top:828.8px" width="13" height="13"><rect x="0.5" y="0.5" width="12" height="12" fill="#fff" stroke="#333"/><path d="M2.6 6.6L5.2 9.4L10.4 3.4" fill="none" stroke="#222" stroke-width="1.2"/></svg>
<svg style="left:57px;top:827.0px" width="16" height="16" viewBox="0 0 16 16"><rect x="1.4" y="1.6" width="2" height="2" fill="#a8e838"/><rect x="1.4" y="5.6" width="2" height="2" fill="#f0a020"/><rect x="1.4" y="9.6" width="2" height="2" fill="#f06020"/><rect x="1.4" y="13.6" width="2" height="2" fill="#e82010"/><rect x="5.4" y="1.6" width="2" height="2" fill="#30e0c0"/><rect x="5.4" y="5.6" width="2" height="2" fill="#a8e838"/><rect x="5.4" y="9.6" width="2" height="2" fill="#f0a020"/><rect x="5.4" y="13.6" width="2" height="2" fill="#f06020"/><rect x="9.4" y="1.6" width="2" height="2" fill="#3070f0"/><rect x="9.4" y="5.6" width="2" height="2" fill="#30e0c0"/><rect x="9.4" y="9.6" width="2" height="2" fill="#a8e838"/><rect x="9.4" y="13.6" width="2" height="2" fill="#f0a020"/><rect x="13.4" y="1.6" width="2" height="2" fill="#1830b0"/><rect x="13.4" y="5.6" width="2" height="2" fill="#3070f0"/><rect x="13.4" y="9.6" width="2" height="2" fill="#30e0c0"/><rect x="13.4" y="13.6" width="2" height="2" fill="#a8e838"/></svg>
<span id="t70" class="t tree" style="left:77px;top:829.6px;letter-spacing:-0.301px;">Field Point Grid</span>
<div class="b " style="left:28px;top:853px;width:12px;height:1px;background-image:linear-gradient(to right,#9a9a9a 1px,transparent 1px);background-size:2px 1px;"></div>
<svg style="left:40px;top:846.8px" width="13" height="13"><rect x="0.5" y="0.5" width="12" height="12" fill="#fff" stroke="#333"/></svg>
<svg style="left:57px;top:845.0px" width="16" height="16" viewBox="0 0 16 16"><path d="M1.2 9H14.8Q14.6 13.2 8 15.2Q1.4 13.2 1.2 9Z" fill="#e83a1a"/><path d="M2.4 9.2H13.6Q13 12 8 13.4Q3 12 2.4 9.2Z" fill="#f4c81a"/><path d="M4 9.2H12Q11.4 11 8 11.8Q4.6 11 4 9.2Z" fill="#3ac84a"/><path d="M3.4 1V6M8 1V6M12.6 1V6M1.8 4.2L3.4 6.4L5 4.2M6.4 4.2L8 6.4L9.6 4.2M11 4.2L12.6 6.4L14.2 4.2M0.8 7.6H15.2" fill="none" stroke="#1a2ae0" stroke-width="1.1"/></svg>
<span id="t71" class="t tree" style="left:77px;top:847.6px;letter-spacing:-0.088px;">Deformed Contours</span>
<div class="b " style="left:28px;top:871px;width:12px;height:1px;background-image:linear-gradient(to right,#9a9a9a 1px,transparent 1px);background-size:2px 1px;"></div>
<svg style="left:23px;top:867.1999999999999px" width="9" height="9"><rect x="0.5" y="0.5" width="8" height="8" rx="1" fill="#fafafa" stroke="#8a8a8a"/><path d="M2.4 4.5H6.6M4.5 2.4V6.6" stroke="#2a3aa0" stroke-width="1"/></svg>
<svg style="left:40px;top:864.8px" width="13" height="13"><rect x="0.5" y="0.5" width="12" height="12" fill="#fff" stroke="#333"/><path d="M2.6 6.6L5.2 9.4L10.4 3.4" fill="none" stroke="#222" stroke-width="1.2"/></svg>
<svg style="left:57px;top:863.0px" width="16" height="16" viewBox="0 0 16 16"><polygon points="4.4,3.6 11.6,3.6 15.4,12.6 0.6,12.6" fill="#e8c8a0" stroke="#6a4a2a" stroke-width="1"/><path d="M3 7H13M1.8 9.8H14.2" stroke="#6a4a2a" stroke-width="1"/></svg>
<span id="t72" class="t tree" style="left:77px;top:865.6px;letter-spacing:-0.392px;">Embankments</span>
<div class="b " style="left:28px;top:889px;width:12px;height:1px;background-image:linear-gradient(to right,#9a9a9a 1px,transparent 1px);background-size:2px 1px;"></div>
<svg style="left:23px;top:885.1999999999999px" width="9" height="9"><rect x="0.5" y="0.5" width="8" height="8" rx="1" fill="#fafafa" stroke="#8a8a8a"/><path d="M2.4 4.5H6.6" stroke="#2a3aa0" stroke-width="1"/></svg>
<svg style="left:40px;top:882.8px" width="13" height="13"><rect x="0.5" y="0.5" width="12" height="12" fill="#fff" stroke="#333"/><path d="M2.6 6.6L5.2 9.4L10.4 3.4" fill="none" stroke="#222" stroke-width="1.2"/></svg>
<svg style="left:57px;top:881.0px" width="16" height="16" viewBox="0 0 16 16"><polygon points="8,1 15.2,4.6 8,8.4 0.8,4.6" fill="#8ab04a" stroke="#3a3a2a" stroke-width="0.8"/><polygon points="0.8,4.6 8,8.4 8,15.4 0.8,11.4" fill="#a08868" stroke="#3a3a2a" stroke-width="0.8"/><polygon points="15.2,4.6 8,8.4 8,15.4 15.2,11.4" fill="#7a6448" stroke="#3a3a2a" stroke-width="0.8"/><path d="M0.8 8.6L8 12.4L15.2 8.6" fill="none" stroke="#e8dcc0" stroke-width="1.2"/></svg>
<span id="t73" class="t tree" style="left:77px;top:883.6px;letter-spacing:-0.438px;">Soil Column</span>
<div class="b " style="left:51px;top:907px;width:12px;height:1px;background-image:linear-gradient(to right,#9a9a9a 1px,transparent 1px);background-size:2px 1px;"></div>
<svg style="left:63px;top:900.8px" width="13" height="13"><rect x="0.5" y="0.5" width="12" height="12" fill="#fff" stroke="#333"/><path d="M2.6 6.6L5.2 9.4L10.4 3.4" fill="none" stroke="#222" stroke-width="1.2"/></svg>
<svg style="left:80px;top:899.0px" width="16" height="16" viewBox="0 0 16 16"><polygon points="8,1 15.2,4.6 8,8.4 0.8,4.6" fill="#8ab04a" stroke="#3a3a2a" stroke-width="0.8"/><polygon points="0.8,4.6 8,8.4 8,15.4 0.8,11.4" fill="#a08868" stroke="#3a3a2a" stroke-width="0.8"/><polygon points="15.2,4.6 8,8.4 8,15.4 15.2,11.4" fill="#7a6448" stroke="#3a3a2a" stroke-width="0.8"/><path d="M0.8 8.6L8 12.4L15.2 8.6" fill="none" stroke="#e8dcc0" stroke-width="1.2"/></svg>
<span id="t74" class="t tree" style="left:100px;top:901.6px;letter-spacing:-0.388px;">Show Lines</span>
<div class="b " style="left:51px;top:925px;width:12px;height:1px;background-image:linear-gradient(to right,#9a9a9a 1px,transparent 1px);background-size:2px 1px;"></div>
<svg style="left:63px;top:918.8px" width="13" height="13"><rect x="0.5" y="0.5" width="12" height="12" fill="#fff" stroke="#333"/><path d="M2.6 6.6L5.2 9.4L10.4 3.4" fill="none" stroke="#222" stroke-width="1.2"/></svg>
<svg style="left:80px;top:917.0px" width="16" height="16" viewBox="0 0 16 16"><polygon points="8,1 15.2,4.6 8,8.4 0.8,4.6" fill="#8ab04a" stroke="#3a3a2a" stroke-width="0.8"/><polygon points="0.8,4.6 8,8.4 8,15.4 0.8,11.4" fill="#a08868" stroke="#3a3a2a" stroke-width="0.8"/><polygon points="15.2,4.6 8,8.4 8,15.4 15.2,11.4" fill="#7a6448" stroke="#3a3a2a" stroke-width="0.8"/><path d="M0.8 8.6L8 12.4L15.2 8.6" fill="none" stroke="#e8dcc0" stroke-width="1.2"/></svg>
<span id="t75" class="t tree" style="left:100px;top:919.6px;letter-spacing:-0.204px;">Show Front Faces</span>
<div class="b " style="left:28px;top:943px;width:12px;height:1px;background-image:linear-gradient(to right,#9a9a9a 1px,transparent 1px);background-size:2px 1px;"></div>
<svg style="left:40px;top:936.8px" width="13" height="13"><rect x="0.5" y="0.5" width="12" height="12" fill="#fff" stroke="#333"/></svg>
<svg style="left:57px;top:935.0px" width="16" height="16" viewBox="0 0 16 16"><rect x="0.8" y="0.8" width="14.4" height="14.4" fill="#e83020" stroke="#222" stroke-width="1"/><polygon points="1.2,1.2 14.8,1.2 14.8,4.4 7,7.6 1.2,5" fill="#c8b090"/><polygon points="1.2,10.4 8,9 14.8,12 14.8,14.8 1.2,14.8" fill="#f4d020"/><path d="M1.2 5L7 7.6L14.8 4.4M1.2 10.4L8 9L14.8 12" fill="none" stroke="#222" stroke-width="0.8"/></svg>
<span id="t76" class="t tree" style="left:77px;top:937.6px;letter-spacing:-0.165px;">Draw Materials on all Queries</span>
<div class="b " style="left:309px;top:160px;width:805.5px;height:814px;background:#fff;border-top:1px solid #8c8c8c;border-left:1px solid #a4a4a4;box-shadow:inset 1px 1px 0 #626262;"></div>
<div class="b " style="left:1114.5px;top:160px;width:4.5px;height:812px;background:#f1f1f1;border-left:1px solid #f8f8f8;"></div>
<svg style="left:0;top:0" width="1920" height="1040" viewBox="0 0 1920 1040"><g shape-rendering="crispEdges"><path d="M553.6 900.4 886.4 900.4 886.4 215.2 553.6 215.2Z" fill="#458cfd"/><path d="M553.6 900.4 886.4 900.4 886.4 215.2 553.6 215.2Z" fill="#4099ff"/><path d="M558.6 900.4 881.4 900.4 886.4 894 886.4 221.6 881.4 215.2 558.6 215.2 553.6 221.6 553.6 894Z" fill="#38a5fb"/><path d="M553.6 885.5 553.6 887.6 559.5 895.7 563.5 900.4 876.5 900.4 880.5 895.7 886.4 887.6 886.4 228 880.5 219.9 876.5 215.2 563.5 215.2 559.5 219.9 553.6 228Z" fill="#2fb2f4"/><path d="M556.3 885.5 559.5 890 568.3 900.4 871.7 900.4 880.5 890 886.4 881.1 886.4 234.5 880.5 225.6 871.7 215.2 568.3 215.2 559.5 225.6 553.6 234.5 553.6 881.1Z" fill="#27bee9"/><path d="M560.5 885.5 565.5 892 573 900.4 867 900.4 874.5 892 879.5 885.5 886.4 874.5 886.4 241.1 879.5 230.1 874.5 223.6 867 215.2 573 215.2 565.5 223.6 560.5 230.1 553.6 241.1 553.6 874.5Z" fill="#1fc9dd"/><path d="M564.5 885.5 571.4 894.1 577.7 900.4 862.3 900.4 868.6 894.1 875.5 885.5 880.5 878.7 885.1 870.6 886.4 867.5 886.4 248.1 885.1 245 880.5 236.9 868.6 221.5 862.3 215.2 577.7 215.2 571.4 221.5 564.5 230.1 559.5 236.9 554.9 245 553.6 248.1 553.6 867.5 554.9 870.6 559.5 878.7Z" fill="#1ad4d0"/><path d="M568.3 885.5 577.4 896.2 582.9 900.4 857.1 900.4 862.6 896.2 868.6 889.5 874.5 882 881.9 870.6 886.4 860.1 886.4 255.5 881.9 245 874.5 233.6 868.6 226.1 862.6 219.4 857.1 215.2 582.9 215.2 577.4 219.4 571.4 226.1 565.5 233.6 558.1 245 553.6 255.5 553.6 860.1 558.1 870.6 559.5 873.2 565.5 882Z" fill="#18ddc2"/><path d="M571.9 885.5 577.4 892.3 587.2 900.4 852.8 900.4 862.6 892.3 874.5 877.5 878.9 870.6 885.2 855.7 886.4 851.5 886.4 264.1 885.2 259.9 878.9 245 874.5 238.1 862.6 223.3 852.8 215.2 587.2 215.2 577.4 223.3 565.5 238.1 561.1 245 554.8 259.9 553.6 264.1 553.6 851.5 554.8 855.7 561.1 870.6 565.5 877.5Z" fill="#1ae4b6"/><path d="M575 885.5 577.4 888.5 591.2 900.4 848.8 900.4 862.6 888.5 868.6 880.8 876 870.6 882.4 855.7 886.4 841.3 886.4 274.3 882.4 259.9 876 245 862.6 227.1 848.8 215.2 591.2 215.2 577.4 227.1 571.4 234.8 564 245 557.6 259.9 553.6 274.3 553.6 841.3 557.6 855.7 564 870.6Z" fill="#22ebaa"/><path d="M578.2 885.5 583.3 890.4 595.1 900.4 844.9 900.4 856.7 890.4 862.6 884.5 873 870.6 879.5 855.7 883.7 840.8 885.7 825.9 886.4 818 886.4 297.6 885.7 289.7 883.7 274.8 879.5 259.9 873 245 861.8 230.1 856.7 225.2 844.9 215.2 595.1 215.2 583.3 225.2 577.4 231.1 567 245 560.5 259.9 556.3 274.8 554.3 289.7 553.6 297.6 553.6 818 554.3 825.9 556.3 840.8 560.5 855.7 567 870.6Z" fill="#2ff19b"/><path d="M581.8 885.5 589.3 892.3 599.1 900.4 840.9 900.4 856.7 887 862.6 880.6 870.1 870.6 876.7 855.7 880.9 840.8 882.9 825.9 884.3 811 885.1 796.1 886 766.3 886.4 739.2 886.4 376.4 886 349.3 885.1 319.5 884.3 304.6 882.9 289.7 880.9 274.8 876.7 259.9 870.1 245 862.6 235 856.7 228.6 840.9 215.2 599.1 215.2 583.3 228.6 577.4 235 569.9 245 563.3 259.9 559.1 274.8 557.1 289.7 555.7 304.6 554.9 319.5 554 349.3 553.6 376.4 553.6 739.2 554.3 781.2 555.7 811 557.1 825.9 559.1 840.8 563.3 855.7 569.9 870.6 577.4 880.6Z" fill="#3ff68a"/><path d="M585.4 885.5 595.2 894.1 601.1 898.9 603.5 900.4 836.5 900.4 838.9 898.9 844.8 894.1 854.6 885.5 862.6 876.6 867.1 870.6 873.8 855.7 878.2 840.8 880.2 825.9 881.5 811 882.4 796.1 883.5 751.4 884.1 706.8 884.3 632.3 884.1 423.7 883.3 349.3 882.4 319.5 881.5 304.6 880.2 289.7 878.2 274.8 873.8 259.9 867.1 245 862.6 239 854.6 230.1 844.8 221.5 838.9 216.7 836.5 215.2 603.5 215.2 601.1 216.7 595.2 221.5 585.4 230.1 577.4 239 572.9 245 566.2 259.9 561.8 274.8 559.8 289.7 558.5 304.6 557.6 319.5 556.7 349.3 555.8 438.6 555.7 632.3 555.9 706.8 557.1 781.2 558.5 811 559.8 825.9 561.8 840.8 566.2 855.7 572.9 870.6 577.4 876.6Z" fill="#52fa7a"/><path d="M589 885.5 601.1 895.7 608.5 900.4 831.5 900.4 838.9 895.7 844.8 890.9 851 885.5 856.7 879.4 864.2 870.6 871 855.7 875.4 840.8 877.4 825.9 878.7 811 879.6 796.1 880.8 751.4 881.3 706.8 881.6 632.3 881.4 423.7 880.6 349.3 879.6 319.5 878.7 304.6 877.4 289.7 875.4 274.8 871 259.9 864.2 245 856.7 236.2 851 230.1 838.9 219.9 831.5 215.2 608.5 215.2 601.1 219.9 595.2 224.7 589 230.1 583.3 236.2 575.8 245 569 259.9 564.6 274.8 562.6 289.7 561.3 304.6 560.4 319.5 559.4 349.3 558.5 438.6 558.4 632.3 558.7 706.8 559.8 781.2 561.3 811 562.6 825.9 564.6 840.8 569 855.7 575.8 870.6 583.3 879.4Z" fill="#65fd69"/><path d="M592.7 885.5 601.1 892.6 607.1 896.5 613.9 900.4 826.1 900.4 832.9 896.5 838.9 892.6 847.3 885.5 850.7 882 861 870.6 868.1 855.7 872.5 840.8 874.6 825.9 876 811 876.9 796.1 878.1 751.4 878.6 706.8 878.9 632.3 878.7 423.7 877.8 349.3 876.9 319.5 876 304.6 874.6 289.7 872.5 274.8 868.1 259.9 861 245 850.7 233.6 844.8 227.9 838.9 223 832.9 219.1 826.1 215.2 613.9 215.2 607.1 219.1 601.1 223 592.7 230.1 589.3 233.6 579 245 571.9 259.9 567.5 274.8 565.4 289.7 564 304.6 563.1 319.5 562.2 349.3 561.3 438.6 561.1 632.3 561.4 706.8 562.5 781.2 564 811 565.4 825.9 567.5 840.8 571.9 855.7 579 870.6Z" fill="#79fe59"/><path d="M596.4 885.5 601.1 889.4 613 897 621.2 900.4 818.8 900.4 827 897 838.9 889.4 843.6 885.5 857.6 870.6 862.6 861.3 865.2 855.7 869.7 840.8 871.9 825.9 873.2 811 874.1 796.1 875.3 751.4 875.9 706.8 876.2 632.3 876 423.7 875.1 349.3 874.1 319.5 873.2 304.6 871.9 289.7 869.7 274.8 865.2 259.9 862.6 254.3 857.6 245 844.8 231.3 838.9 226.2 827 218.6 821 215.9 818.8 215.2 621.2 215.2 613 218.6 601.1 226.2 596.4 230.1 582.4 245 577.4 254.3 574.8 259.9 570.3 274.8 568.1 289.7 566.8 304.6 565.9 319.5 564.9 349.3 564 438.6 563.8 632.3 564.1 706.8 565.3 781.2 566.8 811 568.1 825.9 570.3 840.8 571.4 844.7 574.8 855.7 577.4 861.3 582.4 870.6Z" fill="#8bff4b"/><path d="M600.2 885.5 607.1 890.3 613 893.9 619 896.7 630.5 900.4 809.5 900.4 821 896.7 827 893.9 832.9 890.3 839.8 885.5 844.8 880.6 854.2 870.6 862.6 854.8 866.9 840.8 869.1 825.9 870.5 811 871.4 796.1 872.6 751.4 873.2 706.8 873.5 632.3 873.2 423.7 872.4 349.3 871.4 319.5 870.5 304.6 869.1 289.7 866.9 274.8 862.3 259.9 854.2 245 844.8 235 838.9 229.3 827 221.7 821 218.9 815.1 216.9 809.5 215.2 630.5 215.2 619 218.9 613 221.7 607.1 225.3 600.2 230.1 595.2 235 585.8 245 577.4 260.8 573.1 274.8 570.9 289.7 569.5 304.6 568.6 319.5 567.6 349.3 566.7 438.6 566.5 632.3 566.8 706.8 568 781.2 569.5 811 570.9 825.9 573.1 840.8 577.4 854.8 585.8 870.6 595.2 880.6Z" fill="#9cfe40"/><path d="M604.6 885.5 613 890.9 619 893.7 630.9 897.6 640.8 900.4 799.2 900.4 809.1 897.6 821 893.7 827 890.9 835.4 885.5 838.9 882.8 850.7 870.6 859 855.7 864.1 840.8 866.3 825.9 867.7 811 868.6 796.1 869.7 766.3 870.5 706.8 870.8 557.8 870.5 408.8 869.7 349.3 868.6 319.5 867.7 304.6 866.3 289.7 864.1 274.8 859 259.9 850.7 245 838.9 232.8 832.9 228.4 827 224.7 821 221.9 809.1 218 799.2 215.2 640.8 215.2 630.9 218 619 221.9 613 224.7 604.6 230.1 601.1 232.8 589.3 245 581 259.9 575.9 274.8 573.7 289.7 572.3 304.6 571.4 319.5 570.3 349.3 569.5 408.8 569.2 557.8 569.5 691.9 570.3 766.3 571.4 796.1 572.3 811 573.7 825.9 575.9 840.8 581 855.7 589.3 870.6 601.1 882.8Z" fill="#a9fb39"/><path d="M609.3 885.5 613 887.9 619 890.7 630.9 894.6 642.7 898.1 648.7 899.3 658.1 900.4 781.9 900.4 791.3 899.3 797.3 898.1 803.2 896.4 821 890.7 827 887.9 830.7 885.5 838.9 879.2 847.2 870.6 850.7 864.6 855.7 855.7 861.1 840.8 863.5 825.9 864.9 811 865.9 796.1 866.9 766.3 867.7 706.8 868.1 557.8 867.7 408.8 866.9 349.3 865.9 319.5 864.9 304.6 863.5 289.7 861.1 274.8 855.7 259.9 847.2 245 838.9 236.4 830.7 230.1 827 227.7 821 224.9 809.1 221 797.3 217.5 791.3 216.3 781.9 215.2 658.1 215.2 648.7 216.3 642.7 217.5 630.9 221 619 224.9 613 227.7 609.3 230.1 601.1 236.4 592.8 245 589.3 251 584.3 259.9 578.9 274.8 576.5 289.7 575.1 304.6 574.1 319.5 573.1 349.3 572.3 408.8 571.9 557.8 572.2 691.9 573.1 766.3 574.1 796.1 575.1 811 576.5 825.9 578.9 840.8 584.3 855.7 592.8 870.6 601.1 879.2Z" fill="#b7f735"/><path d="M614.4 885.5 619 887.7 624.9 889.8 642.7 895.2 648.7 896.4 675.4 899.3 705.1 900.4 734.9 900.4 764.6 899.3 791.3 896.4 797.3 895.2 803.2 893.5 821 887.7 827 884.7 838.9 875.6 843.7 870.6 852.4 855.7 857.9 840.8 860.5 825.9 862.1 811 863.1 796.1 864.2 766.3 865 706.8 865.3 557.8 865 408.8 864.2 349.3 863.1 319.5 862.1 304.6 860.5 289.7 857.9 274.8 852.4 259.9 843.7 245 838.9 240 832.9 235.2 825.6 230.1 821 227.9 815.1 225.8 797.3 220.4 791.3 219.2 764.6 216.3 734.9 215.2 705.1 215.2 675.4 216.3 648.7 219.2 642.7 220.4 630.9 223.9 619 227.9 613 230.9 601.1 240 596.3 245 587.6 259.9 582.1 274.8 579.5 289.7 577.9 304.6 576.9 319.5 575.8 349.3 575 408.8 574.7 557.8 574.9 691.9 575.8 766.3 576.9 796.1 577.9 811 579.5 825.9 582.1 840.8 587.6 855.7 596.3 870.6 601.1 875.6 607.1 880.4Z" fill="#c3f134"/><path d="M621.2 885.5 630.9 888.8 642.7 892.3 648.7 893.6 675.4 896.5 705.1 897.6 734.9 897.6 764.6 896.5 791.3 893.6 797.3 892.3 809.1 888.8 821 884.6 827 881.3 838.9 872 840.2 870.6 849.1 855.7 854.7 840.8 857.3 825.9 859 811 860.1 796.1 861.3 766.3 862.2 706.8 862.6 557.8 862.2 408.8 861.3 349.3 860.1 319.5 859 304.6 857.3 289.7 854.7 274.8 849.1 259.9 840.2 245 832.9 238.8 827 234.3 821 231 809.1 226.8 797.3 223.3 791.3 222 764.6 219.1 734.9 218 705.1 218 675.4 219.1 648.7 222 642.7 223.3 630.9 226.8 619 231 613 234.3 601.1 243.6 599.8 245 590.9 259.9 585.3 274.8 582.7 289.7 581 304.6 579.9 319.5 578.7 349.3 577.8 408.8 577.4 557.8 577.7 691.9 578.7 766.3 579.9 796.1 581 811 582.7 825.9 585.3 840.8 590.9 855.7 599.8 870.6 601.1 872 613 881.3 619 884.6Z" fill="#d0ea34"/><path d="M629.9 885.5 642.7 889.4 648.7 890.7 675.4 893.7 690.3 894.4 705.1 894.8 734.9 894.8 749.7 894.4 764.6 893.7 791.3 890.7 797.3 889.4 809.1 885.8 821 881.2 827 877.8 836.2 870.6 838.9 867.1 845.7 855.7 851.5 840.8 854.1 825.9 855.9 811 857 796.1 858.2 766.3 859.2 706.8 859.6 557.8 859.2 408.8 858.2 349.3 857 319.5 855.9 304.6 854.1 289.7 851.5 274.8 845.7 259.9 838.9 248.5 836.2 245 832.9 242.3 827 237.8 821 234.4 810.1 230.1 797.3 226.2 791.3 224.9 764.6 221.9 734.9 220.8 705.1 220.8 675.4 221.9 648.7 224.9 642.7 226.2 629.9 230.1 619 234.4 613 237.8 603.8 245 601.1 248.5 594.3 259.9 588.5 274.8 585.9 289.7 584.1 304.6 583 319.5 581.8 349.3 580.8 408.8 580.4 557.8 580.7 691.9 581.8 766.3 583 796.1 584.1 811 585.9 825.9 588.5 840.8 594.3 855.7 601.1 867.1 603.8 870.6 613 877.8 619 881.2Z" fill="#dbe236"/><path d="M639.3 885.5 648.7 887.9 675.4 890.9 705.1 892.1 734.9 892.1 764.6 890.9 791.3 887.9 800.7 885.5 809.1 882.6 821 877.8 827 874.3 831.8 870.6 838.9 861.5 842.4 855.7 848.2 840.8 851 825.9 852.7 811 853.9 796.1 855.1 766.3 856.1 706.8 856.5 557.8 856.1 408.8 855.1 349.3 853.9 319.5 852.7 304.6 851 289.7 848.2 274.8 842.4 259.9 838.9 254.1 831.8 245 827 241.3 821 237.8 815.1 235.3 797.3 229 791.3 227.7 764.6 224.7 734.9 223.5 705.1 223.5 675.4 224.7 648.7 227.7 642.7 229 630.9 233 619 237.8 613 241.3 608.2 245 601.1 254.1 597.6 259.9 591.8 274.8 589 289.7 587.3 304.6 586.1 319.5 584.9 349.3 583.9 408.8 583.5 557.8 583.9 706.8 584.9 766.3 586.1 796.1 587.3 811 589 825.9 591.8 840.8 597.6 855.7 601.1 861.5 608.2 870.6 613 874.3 619 877.8 630.9 882.6Z" fill="#e5d938"/><path d="M652.5 885.5 675.4 888.1 690.3 888.8 705.1 889.3 734.9 889.3 764.6 888.1 791.3 884.9 797.3 883.5 815.1 876.9 821 874.4 827.3 870.6 832.9 863.9 839 855.7 845 840.8 847.8 825.9 849.6 811 850.7 796.1 852 766.3 853 706.8 853.4 557.8 853 408.8 852 349.3 850.7 319.5 849.6 304.6 847.8 289.7 845 274.8 839 259.9 832.9 251.7 827.3 245 821 241.2 803.2 234.2 797.3 232.1 791.3 230.7 764.6 227.5 734.9 226.3 705.1 226.3 675.4 227.5 648.7 230.7 642.7 232.1 624.9 238.7 619 241.2 612.7 245 607.1 251.7 601 259.9 595 274.8 592.2 289.7 590.4 304.6 589.3 319.5 588 349.3 587 408.8 586.6 557.8 587 706.8 588 766.3 589.3 796.1 590.4 811 592.2 825.9 595 840.8 601 855.7 607.1 863.9 612.7 870.6 619 874.4 630.9 879.3 642.7 883.5 648.7 884.9Z" fill="#eecf3a"/><path d="M679.5 885.5 705.1 886.5 734.9 886.5 764.6 885.3 791.3 881.8 797.3 880.3 803.2 878.1 815.1 873.6 821.7 870.6 827 865.7 832.9 858.4 834.9 855.7 838.9 847.9 841.7 840.8 844.6 825.9 846.4 811 847.6 796.1 848.9 766.3 849.9 706.8 850.3 632.3 850.3 483.3 849.9 408.8 848.9 349.3 847.6 319.5 846.4 304.6 844.6 289.7 841.7 274.8 838.9 267.7 834.9 259.9 832.9 257.2 827 249.9 821 244.6 803.2 237.5 797.3 235.3 791.3 233.8 764.6 230.3 734.9 229.1 705.1 229.1 675.4 230.3 648.7 233.8 642.7 235.3 630.9 239.6 619 244.6 613 249.9 605.1 259.9 601.1 267.7 598.3 274.8 595.4 289.7 593.6 304.6 592.4 319.5 591.1 349.3 590.1 408.8 589.6 557.8 590.1 706.8 591.1 766.3 592.4 796.1 593.6 811 595.4 825.9 598.3 840.8 601.1 847.9 605.1 855.7 613 865.7 618.3 870.6 630.9 876 642.7 880.3 648.7 881.8 660.6 883.5 675.4 885.3Z" fill="#f5c53a"/><path d="M625.8 870.6 642.7 877.1 648.7 878.6 675.4 882.2 705.1 883.5 734.9 883.5 764.6 882.2 779.4 880.4 791.3 878.6 797.3 877.1 809.1 872.7 815.1 870.1 821 866 827 860.4 830.8 855.7 838.4 840.8 841.4 825.9 843.3 811 844.5 796.1 845.8 766.3 846.9 706.8 847.3 557.8 847 423.7 845.8 349.3 844.5 319.5 843.3 304.6 841.4 289.7 838.9 276.8 838.4 274.8 830.8 259.9 827 255.2 821 249.6 815.1 245.5 809.1 242.9 797.3 238.5 791.3 237 764.6 233.4 734.9 232.1 705.1 232.1 675.4 233.4 648.7 237 642.7 238.5 625.8 245 619 249.6 613 255.2 609.2 259.9 601.6 274.8 598.6 289.7 596.7 304.6 595.5 319.5 594.2 349.3 593.1 408.8 592.8 483.3 592.8 647.2 593.1 706.8 594.2 766.3 594.7 781.2 595.5 796.1 596.7 811 598.6 825.9 601.6 840.8 609.2 855.7 613 860.4 619 866Z" fill="#faba39"/><path d="M634.1 870.6 642.7 873.8 648.7 875.4 675.4 879.1 690.3 880 705.1 880.5 734.9 880.5 764.6 879.1 779.4 877.2 791.3 875.4 797.3 873.8 805.9 870.6 815.1 865 821 860.9 826.4 855.7 834.5 840.8 838 825.9 838.9 820.5 840.1 811 841.3 796.1 842.7 766.3 843.8 706.8 844.2 557.8 843.9 423.7 842.7 349.3 841.3 319.5 840.1 304.6 838.9 295.1 838 289.7 834.5 274.8 827 260.7 821 254.7 815.1 250.6 805.9 245 797.3 241.8 791.3 240.2 764.6 236.5 734.9 235.1 705.1 235.1 675.4 236.5 648.7 240.2 642.7 241.8 634.1 245 624.9 250.6 619 254.7 613 260.7 605.5 274.8 602 289.7 601.1 295.1 599.9 304.6 598.7 319.5 597.3 349.3 596.2 408.8 595.8 483.3 595.9 647.2 596.2 706.8 597.3 766.3 597.8 781.2 598.7 796.1 599.9 811 602 825.9 605.5 840.8 613.6 855.7 619 860.9 624.9 865Z" fill="#fdae35"/><path d="M642.7 870.6 648.7 872.2 675.4 876 705.1 877.4 734.9 877.4 764.6 876 791.3 872.2 797.3 870.6 809.1 863.8 821 855.7 827 847.3 830.5 840.8 834.2 825.9 836.6 811 838.1 796.1 839 781.2 839.6 766.3 840.7 706.8 841.2 557.8 840.8 423.7 839.6 349.3 838.1 319.5 836.6 304.6 834.2 289.7 830.5 274.8 827 268.3 821 259.9 815.1 255.7 809.1 251.8 797.3 245 791.3 243.4 764.6 239.6 734.9 238.2 705.1 238.2 675.4 239.6 648.7 243.4 642.7 245 630.9 251.8 619 259.9 613 268.3 609.5 274.8 605.8 289.7 603.4 304.6 601.9 319.5 601 334.4 600.4 349.3 599.3 408.8 598.9 483.3 599 662.1 599.5 721.7 600.4 766.3 601.1 784.3 601.9 796.1 603.4 811 605.8 825.9 609.5 840.8 613 847.3 619 855.7 630.9 863.8Z" fill="#fea130"/><path d="M658.2 870.6 675.4 872.9 690.3 873.8 705.1 874.4 734.9 874.4 764.6 872.9 781.8 870.6 791.3 868.3 797.3 865.9 813.8 855.7 821 848.4 826.3 840.8 830.3 825.9 832.8 811 834.4 796.1 835.4 781.2 836.5 751.4 837.5 691.9 838 557.8 837.9 483.3 837.4 408.8 836.1 349.3 834.4 319.5 832.8 304.6 830.3 289.7 826.3 274.8 821 267.2 813.8 259.9 797.3 249.7 791.3 247.3 781.8 245 764.6 242.7 749.7 241.8 734.9 241.2 705.1 241.2 675.4 242.7 658.2 245 648.7 247.3 642.7 249.7 626.2 259.9 619 267.2 613.7 274.8 609.7 289.7 607.2 304.6 605.6 319.5 604.6 334.4 603.5 364.2 602.5 423.7 602 557.8 602.1 632.3 602.6 706.8 603.9 766.3 605.6 796.1 607.2 811 609.7 825.9 613.7 840.8 619 848.4 626.2 855.7 642.7 865.9 648.7 868.3Z" fill="#fe932a"/><path d="M688 870.6 705.1 871.3 734.9 871.3 752 870.6 764.6 869.5 779.4 866.5 791.3 863.6 797.3 861.1 806.1 855.7 815.1 847.3 821 841 826.2 825.9 828.9 811 830.6 796.1 831.7 781.2 832.4 766.3 833.5 721.7 834.2 647.2 834.4 557.8 834.2 468.4 833.5 393.9 832.4 349.3 831.7 334.4 830.6 319.5 828.9 304.6 826.2 289.7 821.2 274.8 815.1 268.3 809.1 262.6 806.1 259.9 797.3 254.5 791.3 252 779.4 249.1 764.6 246.1 752 245 734.9 244.3 705.1 244.3 690.3 244.9 675.4 246.1 660.6 249.1 648.7 252 642.7 254.5 633.9 259.9 624.9 268.3 619 274.6 613.8 289.7 611.1 304.6 609.4 319.5 608.3 334.4 607.6 349.3 606.5 393.9 605.8 468.4 605.6 557.8 605.8 647.2 606.5 721.7 607.6 766.3 608.3 781.2 609.4 796.1 611.1 811 613.8 825.9 618.8 840.8 624.9 847.3 633.9 855.7 642.7 861.1 648.7 863.6 660.6 866.5 675.4 869.5Z" fill="#fc8423"/><path d="M641.8 855.7 648.7 858.9 660.6 861.9 675.4 865 690.3 866.4 705.1 867.2 734.9 867.2 749.7 866.4 764.6 865 779.4 861.9 791.3 858.9 798.2 855.7 809.1 846.1 814.5 840.8 821.3 825.9 824.6 811 826.7 796.1 827.9 781.2 828.6 766.3 830.1 706.8 830.6 632.3 830.5 468.4 830.1 408.8 828.6 349.3 827.9 334.4 826.7 319.5 824.6 304.6 821.3 289.7 814.5 274.8 809.1 269.5 797.3 259.3 791.3 256.7 779.4 253.7 764.6 250.6 749.7 249.2 734.9 248.4 705.1 248.4 690.3 249.2 675.4 250.6 660.6 253.7 648.7 256.7 641.8 259.9 630.9 269.5 625.5 274.8 618.7 289.7 615.4 304.6 613.3 319.5 612.1 334.4 611.4 349.3 609.9 408.8 609.4 483.3 609.4 632.3 609.9 706.8 611.4 766.3 612.1 781.2 613.3 796.1 615.4 811 619 826.6 625.5 840.8 630.9 846.1Z" fill="#f9751d"/><path d="M654.3 855.7 675.4 860.5 690.3 861.9 705.1 862.8 734.9 862.8 749.7 861.9 764.6 860.5 785.7 855.7 791.3 853.6 797.3 849.9 807.3 840.8 814.8 825.9 819.3 811 821 802.4 821.9 796.1 823.4 781.2 824.3 766.3 824.9 751.4 826.2 706.8 826.9 632.3 826.9 483.3 826.2 408.8 824.3 349.3 823.4 334.4 821.9 319.5 819.3 304.6 814.8 289.7 807.3 274.8 797.3 265.7 791.3 262 785.4 259.8 764.6 255.1 749.7 253.7 734.9 252.8 705.1 252.8 690.3 253.7 675.4 255.1 654.6 259.8 648.7 262 642.7 265.7 632.7 274.8 625.2 289.7 620.7 304.6 619 313.2 618.1 319.5 616.6 334.4 615.7 349.3 613.8 408.8 613.2 468.4 613 557.8 613.3 662.1 613.8 706.8 615.7 766.3 616.6 781.2 618.1 796.1 619 802.4 620.7 811 625.2 825.9 632.7 840.8 642.7 849.9 648.7 853.6Z" fill="#f46617"/><path d="M674.3 855.7 690.3 857.4 705.1 858.4 734.9 858.4 749.7 857.4 765.7 855.7 779.4 851.6 791.3 847.2 797.3 843.3 800 840.8 808 825.9 812.9 811 816 796.1 817.9 781.2 819.3 766.3 821 726.6 821.6 706.8 822.3 632.3 822.3 483.3 821.6 408.8 821 389 819.3 349.3 817.9 334.4 816 319.5 812.9 304.6 808 289.7 800 274.8 797.3 272.3 791.3 268.4 779.4 264 764.6 259.6 749.7 258.2 734.9 257.2 705.1 257.2 690.3 258.2 674.3 259.9 660.6 264 648.7 268.4 642.7 272.3 640 274.8 632 289.7 627.1 304.6 624 319.5 622.1 334.4 620.7 349.3 619 389 618.4 408.8 617.7 483.3 617.7 632.3 618.4 706.8 619 726.6 620.7 766.3 622.1 781.2 624 796.1 627.1 811 632 825.9 640 840.8 642.7 843.3 648.7 847.2 660.6 851.6Z" fill="#ef5811"/><path d="M648.9 840.8 660.6 845.4 675.4 850 690.3 852.1 705.1 853.4 734.9 853.4 749.7 852.1 764.6 850 779.4 845.4 791.3 840.7 797.3 832.9 801 825.9 806.2 811 809.6 796.1 811.7 781.2 813.1 766.3 815.1 724.7 815.8 706.8 816.7 632.3 816.7 483.3 816.2 438.6 815.8 408.8 813.1 349.3 811.7 334.4 809.6 319.5 806.2 304.6 801 289.7 797.3 282.7 791.1 274.8 779.4 270.2 764.6 265.6 749.7 263.5 734.9 262.2 705.1 262.2 690.3 263.5 675.4 265.6 660.6 270.2 654.6 272.5 648.7 274.9 642.7 282.7 639 289.7 633.8 304.6 630.4 319.5 628.3 334.4 626.9 349.3 624.8 393.9 624 423.7 623.3 483.3 623.1 557.8 623.3 632.3 624.2 706.8 626.9 766.3 628.3 781.2 630.4 796.1 633.8 811 639 825.9 642.7 832.9Z" fill="#e84b0c"/><path d="M665.7 840.8 675.4 843.9 690.3 846.1 705.1 847.5 734.9 847.5 749.7 846.1 764.6 843.9 774.3 840.8 779.4 837.6 785.4 833 791.3 828.2 793 825.9 797.3 817.3 799.5 811 802.9 796.1 805.2 781.2 806.7 766.3 809 721.7 809.6 706.8 810.7 632.3 810.7 483.3 810.1 438.6 809.6 408.8 806.7 349.3 805.2 334.4 802.9 319.5 799.5 304.6 797.3 298.3 793 289.7 791.3 287.4 785.4 282.6 779.4 278 774.3 274.8 764.6 271.7 749.7 269.5 734.9 268.1 705.1 268.1 690.3 269.5 675.4 271.7 665.7 274.8 660.6 278 654.6 282.6 648.7 287.4 647 289.7 642.7 298.3 640.5 304.6 637.1 319.5 634.8 334.4 633.3 349.3 631.7 379.1 630.4 408.8 629.5 468.4 629.2 557.8 629.5 647.2 630.4 706.8 632.5 751.4 633.3 766.3 634.8 781.2 637.1 796.1 640.5 811 642.7 817.3 647 825.9 648.7 828.2 660.6 837.6Z" fill="#e14109"/><path d="M696.8 840.8 705.1 841.6 734.9 841.6 743.2 840.8 749.7 839.6 764.6 835.3 778.9 825.9 785.4 818.6 791.4 811 796.2 796.1 797.3 791.2 798.8 781.2 800.4 766.3 803.3 706.8 804.1 662.1 804.5 587.6 804.4 483.3 803.3 408.8 800.4 349.3 798.8 334.4 796.2 319.5 791.4 304.6 785.4 297 778.9 289.7 764.6 280.3 749.7 276 743.2 274.8 734.9 274 705.1 274 696.8 274.8 690.3 276 675.4 280.3 661.1 289.7 654.6 297 648.6 304.6 643.8 319.5 642.7 324.4 641.2 334.4 639.6 349.3 636.7 408.8 635.9 453.5 635.5 528 635.6 632.3 636.7 706.8 639.6 766.3 641.2 781.2 643.8 796.1 648.6 811 654.6 818.6 660.6 825.4 675.4 835.3 690.3 839.6Z" fill="#d83706"/><path d="M682 825.9 690.3 828.5 705.1 831.4 734.9 831.4 749.7 828.5 758 825.9 764.6 823 776.8 811 779.4 807.1 785.5 796.1 790.7 781.2 793.2 766.3 797.3 706.8 798.5 632.3 798.6 557.8 798.5 483.3 797.3 408.8 793.2 349.3 790.7 334.4 785.5 319.5 779.4 308.5 776.8 304.6 764.6 292.6 758 289.7 749.7 287.1 734.9 284.2 705.1 284.2 690.3 287.1 682 289.7 675.4 292.6 663.2 304.6 660.6 308.5 654.5 319.5 649.3 334.4 646.8 349.3 642.7 408.8 641.5 483.3 641.4 557.8 641.7 647.2 642.7 706.8 644.6 736.5 646.8 766.3 648.7 778.7 649.3 781.2 654.5 796.1 660.6 807.1 663.2 811 675.4 823Z" fill="#ce2d04"/><path d="M683.8 811 690.3 814.1 705.1 818.4 734.9 818.4 749.7 814.1 756.2 811 764.6 805.3 770.8 796.1 777.2 781.2 781.3 766.3 785.3 736.5 788.5 706.8 791 632.3 791.3 557.8 791 483.3 788.5 408.8 783.4 364.2 781.3 349.3 777.2 334.4 770.8 319.5 764.6 310.3 756.2 304.6 749.7 301.5 734.9 297.2 705.1 297.2 690.3 301.5 683.8 304.6 675.4 310.3 669.2 319.5 662.8 334.4 658.7 349.3 654.7 379.1 651.5 408.8 649 483.3 648.7 557.8 649 632.3 651.5 706.8 654.7 736.5 658.7 766.3 662.8 781.2 669.2 796.1 675.4 805.3Z" fill="#c32503"/><path d="M695.7 796.1 705.1 800.4 734.9 800.4 744.3 796.1 749.7 792.5 760.4 781.2 764.6 774.8 767.2 766.3 772.1 736.5 776.1 706.8 777.5 677 779 632.3 779.4 557.8 779 483.3 777.5 438.6 776.1 408.8 774.2 393.9 769.8 364.2 767.2 349.3 764.6 340.8 760.4 334.4 749.7 323.1 744.3 319.5 734.9 315.2 705.1 315.2 695.7 319.5 690.3 323.1 679.6 334.4 675.4 340.8 672.8 349.3 667.9 379.1 663.9 408.8 662.5 438.6 661 483.3 660.6 557.8 661 632.3 662.5 677 663.9 706.8 665.8 721.7 670.2 751.4 672.8 766.3 675.4 774.8 679.6 781.2 690.3 792.5Z" fill="#b71d02"/><path d="M701.3 766.3 705.1 770.1 734.9 770.1 738.7 766.3 749.7 746 757.6 721.7 761.7 706.8 764.6 678.8 766.5 632.3 767 557.8 766.5 483.3 764.6 436.8 761.7 408.8 757.6 393.9 753 379.1 749.7 369.6 747 364.2 738.7 349.3 734.9 345.5 705.1 345.5 701.3 349.3 690.3 369.6 682.4 393.9 678.3 408.8 675.4 436.8 673.5 483.3 673 557.8 673.5 632.3 675.4 678.8 678.3 706.8 682.4 721.7 690.3 746Z" fill="#a91601"/><path d="M702.6 691.9 705.1 704.2 734.9 704.2 737.4 691.9 739.9 677 744.1 647.2 745.8 632.3 747.3 557.8 745.8 483.3 742.2 453.5 737.4 423.7 734.9 411.4 705.1 411.4 702.6 423.7 700.1 438.6 695.9 468.4 694.2 483.3 692.7 557.8 694.2 632.3 697.8 662.1Z" fill="#9b0f01"/></g><line x1="577.4" y1="215.2" x2="577.4" y2="900.4" stroke="#f6d2bc" stroke-width="1"/><line x1="601.1" y1="215.2" x2="601.1" y2="900.4" stroke="#f6d2bc" stroke-width="1"/><line x1="838.9" y1="215.2" x2="838.9" y2="900.4" stroke="#f6d2bc" stroke-width="1"/><line x1="862.6" y1="215.2" x2="862.6" y2="900.4" stroke="#f6d2bc" stroke-width="1"/><rect x="553.0" y="214.4" width="334.0" height="686.6" fill="none" stroke="#c8c8c8" stroke-width="1"/><rect x="553.6" y="215.2" width="332.8" height="685.2" fill="none" stroke="#b03808" stroke-width="1.2"/><g fill="#000"><rect x="886.8" y="899.6" width="1.6" height="1.6"/><rect x="886.8" y="887.7" width="1.6" height="1.6"/><rect x="886.8" y="875.8" width="1.6" height="1.6"/><rect x="886.8" y="863.9" width="1.6" height="1.6"/><rect x="886.8" y="852.0" width="1.6" height="1.6"/><rect x="886.8" y="840.2" width="1.6" height="1.6"/><rect x="886.8" y="828.3" width="1.6" height="1.6"/><rect x="886.8" y="816.4" width="1.6" height="1.6"/><rect x="886.8" y="804.5" width="1.6" height="1.6"/><rect x="886.8" y="792.6" width="1.6" height="1.6"/><rect x="886.8" y="780.7" width="1.6" height="1.6"/><rect x="886.8" y="768.8" width="1.6" height="1.6"/><rect x="886.8" y="756.9" width="1.6" height="1.6"/><rect x="886.8" y="745.1" width="1.6" height="1.6"/><rect x="886.8" y="733.2" width="1.6" height="1.6"/><rect x="886.8" y="721.3" width="1.6" height="1.6"/><rect x="886.8" y="709.4" width="1.6" height="1.6"/><rect x="886.8" y="697.5" width="1.6" height="1.6"/><rect x="886.8" y="685.6" width="1.6" height="1.6"/><rect x="886.8" y="673.7" width="1.6" height="1.6"/><rect x="886.8" y="661.8" width="1.6" height="1.6"/><rect x="886.8" y="650.0" width="1.6" height="1.6"/><rect x="886.8" y="638.1" width="1.6" height="1.6"/><rect x="886.8" y="626.2" width="1.6" height="1.6"/><rect x="886.8" y="614.3" width="1.6" height="1.6"/><rect x="886.8" y="602.4" width="1.6" height="1.6"/><rect x="886.8" y="590.5" width="1.6" height="1.6"/><rect x="886.8" y="578.6" width="1.6" height="1.6"/><rect x="886.8" y="566.7" width="1.6" height="1.6"/><rect x="886.8" y="554.8" width="1.6" height="1.6"/><rect x="886.8" y="543.0" width="1.6" height="1.6"/><rect x="886.8" y="531.1" width="1.6" height="1.6"/><rect x="886.8" y="519.2" width="1.6" height="1.6"/><rect x="886.8" y="507.3" width="1.6" height="1.6"/><rect x="886.8" y="495.4" width="1.6" height="1.6"/><rect x="886.8" y="483.5" width="1.6" height="1.6"/><rect x="886.8" y="471.6" width="1.6" height="1.6"/><rect x="886.8" y="459.7" width="1.6" height="1.6"/><rect x="886.8" y="447.9" width="1.6" height="1.6"/><rect x="886.8" y="436.0" width="1.6" height="1.6"/><rect x="886.8" y="424.1" width="1.6" height="1.6"/><rect x="886.8" y="412.2" width="1.6" height="1.6"/><rect x="886.8" y="400.3" width="1.6" height="1.6"/><rect x="886.8" y="388.4" width="1.6" height="1.6"/><rect x="886.8" y="376.5" width="1.6" height="1.6"/><rect x="886.8" y="364.6" width="1.6" height="1.6"/><rect x="886.8" y="352.8" width="1.6" height="1.6"/><rect x="886.8" y="340.9" width="1.6" height="1.6"/><rect x="886.8" y="329.0" width="1.6" height="1.6"/><rect x="886.8" y="317.1" width="1.6" height="1.6"/><rect x="886.8" y="305.2" width="1.6" height="1.6"/><rect x="886.8" y="293.3" width="1.6" height="1.6"/><rect x="886.8" y="281.4" width="1.6" height="1.6"/><rect x="886.8" y="269.5" width="1.6" height="1.6"/><rect x="886.8" y="257.6" width="1.6" height="1.6"/><rect x="886.8" y="245.8" width="1.6" height="1.6"/><rect x="886.8" y="233.9" width="1.6" height="1.6"/><rect x="886.8" y="222.0" width="1.6" height="1.6"/></g><line x1="720.5" y1="215.2" x2="720.5" y2="900.4" stroke="#9a9a9a" stroke-width="1"/><line x1="720.5" y1="215.2" x2="720.5" y2="900.4" stroke="#fff" stroke-width="1.2" stroke-dasharray="4 1"/><circle cx="553.6" cy="215.2" r="2.4" fill="none" stroke="#000" stroke-width="1"/><circle cx="886.4" cy="215.2" r="2.4" fill="none" stroke="#000" stroke-width="1"/><circle cx="553.6" cy="900.4" r="2.4" fill="none" stroke="#000" stroke-width="1"/><circle cx="886.4" cy="900.4" r="2.4" fill="none" stroke="#000" stroke-width="1"/><circle cx="720.5" cy="215.2" r="2.6" fill="#fff" stroke="#c8c8c8" stroke-width="0.8"/><circle cx="720.5" cy="900.4" r="2.6" fill="#fff" stroke="#c8c8c8" stroke-width="0.8"/><circle cx="720" cy="557.6" r="3.6" fill="#ffd60a"/><path d="M329.5 162V952.5H1114" fill="none" stroke="#000" stroke-width="1"/><path d="M326 948.0H328.4M326 936.1H328.4M326 924.2H328.4M326 912.3H328.4M323 900.4H329M326 888.5H328.4M326 876.6H328.4M326 864.7H328.4M326 852.8H328.4M325 841.0H329M326 829.1H328.4M326 817.2H328.4M326 805.3H328.4M326 793.4H328.4M323 781.5H329M326 769.6H328.4M326 757.7H328.4M326 745.9H328.4M326 734.0H328.4M325 722.1H329M326 710.2H328.4M326 698.3H328.4M326 686.4H328.4M326 674.5H328.4M323 662.6H329M326 650.8H328.4M326 638.9H328.4M326 627.0H328.4M326 615.1H328.4M325 603.2H329M326 591.3H328.4M326 579.4H328.4M326 567.5H328.4M326 555.6H328.4M323 543.8H329M326 531.9H328.4M326 520.0H328.4M326 508.1H328.4M326 496.2H328.4M325 484.3H329M326 472.4H328.4M326 460.5H328.4M326 448.7H328.4M326 436.8H328.4M323 424.9H329M326 413.0H328.4M326 401.1H328.4M326 389.2H328.4M326 377.3H328.4M325 365.4H329M326 353.6H328.4M326 341.7H328.4M326 329.8H328.4M326 317.9H328.4M323 306.0H329M326 294.1H328.4M326 282.2H328.4M326 270.3H328.4M326 258.4H328.4M325 246.6H329M326 234.7H328.4M326 222.8H328.4M326 210.9H328.4M326 199.0H328.4M323 187.1H329M326 175.2H328.4M339.6 954V956.2M351.5 954V956.2M363.4 953V958.6M375.2 954V956.2M387.1 954V956.2M399.0 954V956.2M410.9 954V956.2M422.8 953V957M434.7 954V956.2M446.6 954V956.2M458.5 954V956.2M470.4 954V956.2M482.2 953V958.6M494.1 954V956.2M506.0 954V956.2M517.9 954V956.2M529.8 954V956.2M541.7 953V957M553.6 954V956.2M565.5 954V956.2M577.3 954V956.2M589.2 954V956.2M601.1 953V958.6M613.0 954V956.2M624.9 954V956.2M636.8 954V956.2M648.7 954V956.2M660.6 953V957M672.4 954V956.2M684.3 954V956.2M696.2 954V956.2M708.1 954V956.2M720.0 953V958.6M731.9 954V956.2M743.8 954V956.2M755.7 954V956.2M767.6 954V956.2M779.4 953V957M791.3 954V956.2M803.2 954V956.2M815.1 954V956.2M827.0 954V956.2M838.9 953V958.6M850.8 954V956.2M862.7 954V956.2M874.5 954V956.2M886.4 954V956.2M898.3 953V957M910.2 954V956.2M922.1 954V956.2M934.0 954V956.2M945.9 954V956.2M957.8 953V958.6M969.6 954V956.2M981.5 954V956.2M993.4 954V956.2M1005.3 954V956.2M1017.2 953V957M1029.1 954V956.2M1041.0 954V956.2M1052.9 954V956.2M1064.8 954V956.2M1076.6 953V958.6M1088.5 954V956.2M1100.4 954V956.2M1112.3 954V956.2" stroke="#000" stroke-width="1.1" fill="none"/><text transform="translate(321.2 900.4) rotate(-90)" text-anchor="middle" font-size="10.6" font-family="Liberation Sans, sans-serif" fill="#000">0</text><text transform="translate(321.2 781.5) rotate(-90)" text-anchor="middle" font-size="10.6" font-family="Liberation Sans, sans-serif" fill="#000">20</text><text transform="translate(321.2 662.6) rotate(-90)" text-anchor="middle" font-size="10.6" font-family="Liberation Sans, sans-serif" fill="#000">40</text><text transform="translate(321.2 543.8) rotate(-90)" text-anchor="middle" font-size="10.6" font-family="Liberation Sans, sans-serif" fill="#000">60</text><text transform="translate(321.2 424.9) rotate(-90)" text-anchor="middle" font-size="10.6" font-family="Liberation Sans, sans-serif" fill="#000">80</text><text transform="translate(321.2 306.0) rotate(-90)" text-anchor="middle" font-size="10.6" font-family="Liberation Sans, sans-serif" fill="#000">100</text><text transform="translate(321.2 187.1) rotate(-90)" text-anchor="middle" font-size="10.6" font-family="Liberation Sans, sans-serif" fill="#000">120</text><text x="362.2" y="967.2" text-anchor="middle" font-size="10.6" font-family="Liberation Sans, sans-serif" fill="#000">-60</text><text x="481.0" y="967.2" text-anchor="middle" font-size="10.6" font-family="Liberation Sans, sans-serif" fill="#000">-40</text><text x="599.9" y="967.2" text-anchor="middle" font-size="10.6" font-family="Liberation Sans, sans-serif" fill="#000">-20</text><text x="720.0" y="967.2" text-anchor="middle" font-size="10.6" font-family="Liberation Sans, sans-serif" fill="#000">0</text><text x="838.9" y="967.2" text-anchor="middle" font-size="10.6" font-family="Liberation Sans, sans-serif" fill="#000">20</text><text x="957.8" y="967.2" text-anchor="middle" font-size="10.6" font-family="Liberation Sans, sans-serif" fill="#000">40</text><text x="1076.6" y="967.2" text-anchor="middle" font-size="10.6" font-family="Liberation Sans, sans-serif" fill="#000">60</text></svg>
<div class="b " style="left:663px;top:903px;width:61px;height:19.6px;background:#fff;border:1px solid #000;overflow:hidden;"><span class="t" style="left:2.4px;top:3px;font-size:10.5px;color:#000;">Ground Improvement Region 1</span></div>
<div class="b " style="left:723px;top:903px;width:105px;height:19.6px;background:#fff;border:1px solid #000;overflow:hidden;"><span class="t" style="left:2.6px;top:3px;font-size:10.5px;color:#000;">Embankment Load 1</span></div>
<div class="b " style="left:309px;top:973px;width:1606px;height:40px;background:#f0f0f0;"></div>
<div class="b " style="left:309px;top:971.8px;width:1606px;height:1.4px;background:#000;"></div>
<div class="b " style="left:309px;top:1013px;width:1606px;height:1px;background:#9c9c9c;"></div>
<div class="b " style="left:309px;top:1014px;width:1606px;height:1px;background:#fff;"></div>
<div class="b " style="left:309.5px;top:973.5px;width:20px;height:17.5px;background:#f2f2f2;border-right:1.6px solid #a6a6a6;border-bottom:1.6px solid #a6a6a6;border-left:1px solid #fafafa;"></div>
<svg style="left:0;top:0" width="1920" height="1040"><g fill="#000"><rect x="315.0" y="977.6" width="1.4" height="8"/><polygon points="316.8,981.6 322.2,977.4 322.2,985.8"/></g></svg>
<div class="b " style="left:330.5px;top:973.5px;width:20px;height:17.5px;background:#f2f2f2;border-right:1.6px solid #a6a6a6;border-bottom:1.6px solid #a6a6a6;border-left:1px solid #fafafa;"></div>
<svg style="left:0;top:0" width="1920" height="1040"><g fill="#000"><polygon points="336.6,981.6 342.2,977.4 342.2,985.8"/></g></svg>
<div class="b " style="left:351.5px;top:973.5px;width:20px;height:17.5px;background:#f2f2f2;border-right:1.6px solid #a6a6a6;border-bottom:1.6px solid #a6a6a6;border-left:1px solid #fafafa;"></div>
<span id="t77" class="t stg" style="left:357.1px;top:976px;font-weight:bold;font-size:11px;">#</span>
<div class="b " style="left:372.5px;top:973.5px;width:20px;height:17.5px;background:#f2f2f2;border-right:1.6px solid #a6a6a6;border-bottom:1.6px solid #a6a6a6;border-left:1px solid #fafafa;"></div>
<svg style="left:0;top:0" width="1920" height="1040"><g fill="#a0a0a0"><polygon points="385.4,981.6 379.8,977.4 379.8,985.8"/></g></svg>
<div class="b " style="left:393.5px;top:973.5px;width:20px;height:17.5px;background:#f2f2f2;border-right:1.6px solid #a6a6a6;border-bottom:1.6px solid #a6a6a6;border-left:1px solid #fafafa;"></div>
<svg style="left:0;top:0" width="1920" height="1040"><g fill="#000"><rect x="405.8" y="977.6" width="1.4" height="8"/><polygon points="405.4,981.6 400.0,977.4 400.0,985.8"/></g></svg>
<svg style="left:0;top:0" width="1920" height="1040">
<path d="M416 973.4L422.6 989.6H558.6L565.4 973.4" fill="#f6f6f6" stroke="none"/>
<path d="M560 973.4L566.6 989.6H621.6L628.4 973.4" fill="#f6f6f6" stroke="none"/>
<path d="M623 973.4L629.6 989.6H686L693.4 973.4Z" fill="#fff" stroke="none"/>
<path d="M416 973.4L422.6 989.6H558.6L565.4 973.4M560 973.4L566.6 989.6H621.6L628.4 973.4M623 973.4L629.6 989.6H686L693.4 973.4" fill="none" stroke="#000" stroke-width="1"/>
<path d="M423 990.4H559M567 990.4H622M630 990.4H686" stroke="#9a9a9a" stroke-width="0.8"/>
</svg>
<span id="t78" class="t stg" style="left:432.6px;top:975.6px;letter-spacing:0.208px;">Before Embankment</span>
<span id="t79" class="t stg" style="left:573.2px;top:975.6px;letter-spacing:0.174px;">Stage 2</span>
<span id="t80" class="t stg" style="left:634.2px;top:975.6px;letter-spacing:0.154px;font-weight:bold;">Stage 3</span>
<div class="b " style="left:1759px;top:993px;width:134px;height:20.4px;background:#fff;border:1.2px solid #000;"></div>
<div class="b " style="left:1119px;top:160px;width:796px;height:811.8px;background:#fff;border-top:1px solid #8c8c8c;border-left:1px solid #a4a4a4;box-shadow:inset 1px 1px 0 #5c5c5c;border-right:1px solid #ececec;"></div>
<svg style="left:0;top:0" width="1920" height="1040" viewBox="0 0 1920 1040"><defs>
<linearGradient id="spk" gradientUnits="userSpaceOnUse" x1="1621.7" y1="544.6" x2="1613.2" y2="576">
<stop offset="0" stop-color="#8a0802"/><stop offset="0.1" stop-color="#a81402"/><stop offset="0.25" stop-color="#d83706"/><stop offset="0.4" stop-color="#f9781e"/><stop offset="0.52" stop-color="#fcb136"/><stop offset="0.62" stop-color="#e1dd37"/><stop offset="0.72" stop-color="#a4fc3c"/><stop offset="0.82" stop-color="#46f884"/><stop offset="0.9" stop-color="#19d5cd"/><stop offset="1" stop-color="#37a8fa"/></linearGradient>
<filter id="bl" x="-10%" y="-10%" width="120%" height="120%"><feGaussianBlur stdDeviation="2.5"/></filter>
<pattern id="hat" width="3.2" height="40" patternUnits="userSpaceOnUse"><rect x="0" y="0" width="0.7" height="40" fill="#8a8a8a" opacity="0.55"/></pattern>
</defs><polygon points="1450.0,269.0 1884.5,380.4 1878.0,421.0 1664.3,890.0 1163.0,725.5 1157.0,685.0" fill="#d9e7d9"/><polygon points="1450.0,269.0 1884.5,380.4 1667.7,849.7 1157.0,685.0" fill="#d4e3d4"/><polygon points="1450.0,269.0 1451.0,309.5 1163.0,725.5 1157.0,685.0" fill="#cdd9cd"/><polygon points="1450.0,269.0 1884.5,380.4 1878.0,421.0 1451.0,309.5" fill="#d8e7d8"/><polygon points="1451.0,309.5 1878.0,421.0 1664.3,890.0 1163.0,725.5" fill="#d8e7d9"/><polygon points="1884.5,380.4 1667.7,849.7 1664.3,890.0 1878.0,421.0" fill="#cbdccb"/><polygon points="1157.0,685.0 1667.7,849.7 1664.3,890.0 1163.0,725.5" fill="#d5e5d5"/><path d="M1451.0 309.5 L1878.0 421.0 L1664.3 890.0 L1163.0 725.5 Z M1450.0 269.0 L1451.0 309.5 M1884.5 380.4 L1878.0 421.0 M1667.7 849.7 L1664.3 890.0 M1157.0 685.0 L1163.0 725.5" fill="none" stroke="#2f6e3a" stroke-width="1.1"/><path d="M1163.0 725.5 L1664.3 890.0 L1878.0 421.0" fill="none" stroke="#2a6a34" stroke-width="1.8"/></svg>
<svg style="left:0;top:0" width="1920" height="1040" viewBox="0 0 1920 1040"><defs><pattern id="dp" width="61" height="53" patternUnits="userSpaceOnUse" patternTransform="rotate(17)"><rect width="61" height="53" fill="#000"/><path d="M19.8 8.0h1M4.4 28.4h1M35.6 48.2h1M2.3 23.0h1M14.7 29.2h1M50.4 6.6h1M38.5 30.9h1M35.2 21.0h1M2.8 45.5h1M25.6 28.7h2M18.8 43.3h1M6.3 30.3h1M22.7 29.0h1M34.4 32.8h1.5M41.5 22.7h1M28.4 48.9h1M18.3 42.1h1M5.0 15.9h1.5M53.4 38.7h1M37.1 3.9h2M25.5 40.1h1M56.9 22.4h1M46.6 30.4h1M20.7 18.6h1.5M35.4 24.2h1M57.6 25.1h1M3.7 37.2h2M60.6 43.6h1M43.7 47.0h1M1.4 24.5h1M37.3 26.2h1M46.9 6.9h1M24.3 48.6h1.5M4.9 23.8h2M16.9 7.3h1.5M52.7 14.8h1.5M60.2 36.2h1.5M58.4 8.0h1M9.2 34.9h1M29.6 31.2h1M17.2 7.7h2M22.5 30.0h1M42.1 27.3h2M40.0 39.2h1.5M54.9 41.3h2M23.9 21.1h1M29.4 21.2h1M4.1 11.1h1M6.7 31.8h1M0.0 8.0h1M57.9 32.5h1M53.3 32.5h1M38.7 50.6h2M22.2 6.5h1.5M60.6 24.7h1.5M19.0 7.6h1M45.2 25.4h1M31.5 10.9h2M22.1 36.6h1M46.2 15.8h1M42.5 13.8h1M55.4 18.9h1M32.5 41.3h1M38.8 32.5h1M49.2 43.4h1M12.2 26.1h1M60.4 41.9h1.5M15.8 36.7h1M27.3 49.7h1M58.3 19.3h1M6.2 24.9h1M12.5 33.1h2M51.3 25.4h1M48.8 4.5h1M55.5 41.5h1M29.2 9.5h1M5.3 50.1h1.5M28.3 39.4h1M44.2 9.0h1M1.7 31.3h1.5M49.2 7.7h2M59.8 34.8h1M9.5 29.1h1M0.9 51.5h1M32.1 49.5h1.5M60.2 10.3h1M1.7 11.3h2M14.7 31.1h1M33.2 44.2h1M55.5 18.8h1.5M40.4 43.2h2M25.7 48.6h2M8.0 8.0h2M1.1 23.3h1M37.1 41.1h1M10.5 25.1h1M33.9 17.3h2M32.4 25.6h1M53.9 3.0h1M16.9 40.9h2M27.6 1.5h1M27.0 32.5h2M37.0 10.6h1M27.6 28.3h1.5M31.0 13.1h2M53.5 49.9h1M56.3 47.3h1M51.2 7.3h1M23.9 16.7h1M26.1 11.3h1M47.8 47.5h1M57.3 34.1h1M8.7 46.8h1.5M13.4 50.5h1.5M54.0 8.6h1M9.8 22.9h2M24.6 22.3h1M19.4 38.3h1M20.6 24.3h1M23.4 27.4h1M31.2 3.4h1M59.3 5.6h1M16.6 48.0h1M16.5 6.9h1.5M51.8 35.8h1M24.8 28.4h2M34.8 37.1h1M17.0 42.4h1M25.9 3.8h1M38.7 42.5h1M37.1 11.8h1M52.6 24.0h1M60.7 22.1h1M37.9 2.3h1M57.2 51.4h1M3.1 10.7h1M38.3 28.1h1M17.7 26.5h1M16.5 42.6h1M2.3 1.0h2M33.6 10.0h1.5M15.0 23.7h1.5M40.0 28.9h1.5M59.2 16.3h1M59.9 18.2h1M24.7 18.4h1M51.1 0.8h1M26.3 2.9h1.5M53.1 35.5h1M36.5 36.7h1M28.0 8.3h1.5M0.2 19.3h1M59.3 29.0h1M2.1 46.8h1M21.8 0.1h1.5M5.1 14.8h1M15.1 41.1h1M16.1 4.8h1.5M35.8 20.9h1M18.6 12.3h2M58.4 45.2h1M40.1 37.9h2M23.8 17.3h1.5M9.1 38.4h1M2.7 44.3h2M38.3 38.9h2M8.5 27.8h2M34.7 43.1h1M50.4 31.0h1M5.2 2.2h1M58.5 20.0h1.5M34.1 33.3h2M41.5 25.9h1M27.9 3.7h2M54.8 4.9h2M4.0 39.0h1M49.4 44.8h1M44.5 10.9h1.5M30.1 20.3h1.5M55.5 15.2h1M37.6 34.1h1M36.6 17.6h1M37.9 7.1h1.5M3.7 14.2h1M42.2 35.8h1M43.2 15.1h1.5M28.4 6.3h2M12.2 51.8h1.5M1.1 24.3h2M59.1 23.8h1M23.6 48.6h1M4.6 4.8h2M16.0 19.1h2M50.0 27.0h1M42.9 12.3h1.5M24.0 8.4h1.5M41.6 21.5h1M25.4 19.9h1M51.3 0.1h1M51.2 6.4h1M43.5 47.8h1M15.4 3.4h1.5M60.9 31.2h1M56.5 40.0h1M17.1 2.7h1M38.7 7.9h1M26.6 16.7h1M47.9 22.7h1M49.5 33.4h2M33.5 38.1h1M56.9 21.8h2M45.9 34.2h1M29.6 48.3h2M7.8 25.0h1M17.2 13.6h1M24.8 12.6h1.5M34.0 20.9h1M39.2 4.0h2M55.3 26.3h1M27.6 17.6h1.5M26.1 29.0h1M5.5 18.1h1M19.5 19.5h2M12.3 1.1h1.5M23.4 39.5h1M23.0 17.9h1M30.4 30.4h1M7.7 26.7h1M5.6 47.5h1.5M24.4 23.6h1M51.8 46.3h1M7.8 22.5h1.5M59.1 26.0h1M23.9 49.1h2M52.2 51.5h1M47.8 11.9h1M31.9 36.1h1.5M5.2 41.2h1M47.7 12.3h1M39.4 16.1h1M38.2 28.0h1.5M42.6 5.9h1M18.3 50.0h1M23.7 11.8h2M0.1 28.5h1.5M17.0 16.8h1M29.0 12.4h1M1.8 21.8h1M3.4 10.3h1.5M4.9 12.1h1.5M56.4 12.0h1M42.4 38.1h1M41.6 10.5h1M45.1 26.8h1M30.2 10.6h1M14.1 11.7h1M6.6 33.1h2M11.4 11.8h1.5M55.5 3.0h2M8.9 20.9h1M1.4 31.6h1.5M3.2 3.2h1.5M27.4 37.7h1M44.7 52.9h1M20.1 9.8h2M45.5 1.7h1.5M51.2 52.2h1.5M10.3 0.2h1M4.9 22.3h1M34.2 40.2h1.5M21.8 43.5h1.5M5.4 37.4h1M22.7 48.7h1M19.7 39.1h1.5M1.8 21.8h1.5M2.5 1.8h1M49.0 3.3h1M45.6 47.6h1M22.1 17.8h2M2.7 39.6h1M56.4 15.8h2M55.9 33.6h1M1.5 12.4h1.5M43.6 24.7h1.5M48.2 48.4h1.5M8.1 26.3h1M49.0 39.1h1M37.0 17.4h1M28.1 41.5h2M4.8 10.5h1M15.1 3.4h1M29.4 28.9h1M59.8 46.8h1M16.2 4.5h1M25.7 52.4h1.5M10.6 7.0h1.5M37.8 35.7h2M51.7 35.2h1M47.6 15.6h1M34.6 19.8h1M12.2 13.1h1M14.4 14.9h2M11.5 3.4h1M60.5 26.9h1M39.6 5.3h1.5M60.4 5.4h1.5M53.9 12.2h1.5M55.8 2.1h1M14.2 2.7h2M59.4 30.9h1M22.7 45.9h1.5M36.8 41.1h1M6.5 31.6h2M21.3 2.0h1M8.6 10.8h1M2.3 38.8h1M49.7 43.4h1.5M41.4 9.8h1M4.8 1.7h1.5M33.4 3.4h1M48.5 35.2h1M39.0 4.8h1M24.3 14.4h1M40.7 22.1h1M19.1 30.0h1M25.3 1.0h1M39.3 20.7h1.5M12.4 0.3h1M25.8 43.5h1.5M35.2 19.3h1M7.9 2.7h1M39.1 48.2h1M34.9 49.1h2M10.5 18.4h1M31.8 49.1h1M23.4 39.9h1M18.4 44.4h1M59.5 25.6h1M37.1 33.7h1M55.2 32.9h1M39.1 45.4h2M24.7 44.9h1.5M11.2 11.6h1.5M57.3 8.3h1M7.5 13.1h1M2.5 29.8h1M40.7 17.2h1.5M36.6 29.2h1M39.6 16.3h1M26.0 34.9h1.5M30.7 9.5h1M37.8 25.9h1M27.3 32.8h1.5M51.0 43.0h1.5M6.5 6.8h1.5M22.3 42.5h2M31.1 2.2h1M5.0 38.9h2M4.9 39.9h1.5M39.8 41.6h1M52.3 52.8h1M11.8 52.0h1.5M17.6 43.0h1M41.9 38.2h1M4.0 18.6h1M9.7 47.5h1M55.2 24.2h1M30.6 48.8h1M36.1 32.6h1M19.5 2.0h1M24.6 33.7h1M41.5 47.5h1M48.3 14.0h2M3.0 45.5h1.5M33.9 30.7h1M15.4 28.4h1.5M45.0 19.7h1.5M60.4 30.6h1M20.2 4.3h1M10.8 39.4h1M18.1 27.4h1M39.0 52.2h2M56.6 47.5h1M45.6 11.7h1M37.6 22.9h2M22.2 2.5h1.5M13.9 34.6h1M3.3 30.1h1M6.5 18.9h1M25.2 16.0h1M12.5 33.1h1.5M9.7 0.7h1M43.2 23.9h1M38.9 46.2h1M24.5 14.0h1M3.4 43.5h1M36.3 30.7h2M57.2 38.9h1M10.1 0.0h1M32.4 21.5h1M9.7 48.3h1M0.8 29.2h1M8.7 10.6h2M39.2 34.3h1.5M49.6 9.3h1M3.9 33.2h1.5M43.6 0.3h1.5M45.5 24.7h1.5M10.7 52.8h1M14.2 2.1h1M54.4 49.0h1M43.4 14.1h2M41.4 36.3h2M59.3 15.7h1M5.2 26.9h1M15.9 12.5h1M57.6 39.5h1M11.7 20.6h2M14.6 48.1h2M28.6 44.5h1M52.3 23.2h1M34.8 16.3h1M23.9 31.0h2M55.6 7.7h1M6.8 33.0h1M21.0 7.5h1M1.9 7.3h1M42.5 39.0h1M52.2 40.4h1M49.9 43.4h1M53.7 40.1h1.5M6.5 10.9h1M2.1 50.3h1M50.3 33.5h1M29.1 7.0h1M18.0 17.8h1M1.3 13.6h1M3.0 40.3h1M46.9 31.9h1.5M51.9 32.8h1M48.1 1.7h2M47.2 18.4h1M32.8 11.5h1M35.0 15.2h1.5M0.1 10.7h1M0.3 26.0h1.5M42.4 43.7h1.5M36.1 50.7h2M15.9 50.0h1M49.7 49.7h1M30.4 5.8h1M29.9 52.5h2M48.0 33.3h1M5.8 49.2h1M25.7 34.2h1M12.6 13.9h2M30.6 20.1h1M57.6 6.7h2M46.0 39.9h1M21.3 17.3h1M52.9 23.9h2M45.3 9.0h1.5M42.0 13.6h1M7.7 24.5h1M31.0 14.2h2M9.4 8.3h1M44.1 32.0h1M9.8 17.4h1M15.8 50.6h1M10.0 34.9h1M23.4 52.1h1M44.7 23.1h1M6.7 48.3h1M12.6 20.6h1M0.8 45.3h1.5M42.3 26.5h1M28.3 7.5h2M45.0 0.3h1M55.4 22.8h2M35.8 34.3h1M40.7 34.6h2M52.0 36.0h1M27.7 16.6h1M54.6 12.8h1.5M43.5 33.4h1M51.8 25.6h1M37.9 21.7h1M54.6 17.4h1M23.7 26.0h1M2.3 28.8h1M43.7 50.4h1M31.7 5.4h2M27.9 10.9h1.5M31.2 33.9h1M31.8 21.7h1.5M12.8 36.3h1.5M31.3 49.4h2M21.7 3.0h1M23.3 3.3h1M25.5 22.3h1M35.4 5.8h1M45.2 49.8h2M59.3 52.7h1.5M28.2 8.7h1M49.4 33.6h1.5M39.2 38.2h1M21.5 33.9h1.5M28.6 15.6h2M39.6 41.3h1.5M21.6 45.1h1M43.0 36.4h1.5M41.4 25.5h1M21.8 34.7h1M29.3 22.7h1M40.2 19.2h1M52.1 3.0h2M55.3 41.6h1M32.4 18.3h2M0.9 0.6h1M40.0 13.3h1" stroke="#fff" stroke-width="1"/></pattern><pattern id="lp" width="61" height="53" patternUnits="userSpaceOnUse" patternTransform="rotate(-9)"><path d="M35.3 45.3h1.2M11.3 24.0h1.2M47.9 11.1h1.2M24.6 28.3h1.2M37.2 36.5h1.2M59.6 4.8h1.2M55.0 29.1h1.2M38.8 15.7h1.2M30.2 11.3h1.2M4.8 44.5h1.2M40.9 6.2h1.2M7.2 22.2h1.2M50.5 25.1h1.2M34.0 25.7h1.2M55.2 37.1h1.2M15.0 8.7h1.2M36.6 38.9h1.2M9.8 17.0h1.2M42.4 26.4h1.2M18.1 24.7h1.2M26.0 53.0h1.2M41.2 9.6h1.2M22.0 34.3h1.2M1.3 2.4h1.2M44.9 52.9h1.2M49.3 5.0h1.2M29.5 40.1h1.2M8.8 11.3h1.2M25.4 6.7h1.2M5.8 34.9h1.2M20.8 41.3h1.2M33.8 48.4h1.2M17.3 18.1h1.2M15.3 2.8h1.2" stroke="#a8b8c0" stroke-width="1.1"/></pattern><mask id="dm" maskUnits="userSpaceOnUse" x="1380" y="380" width="320" height="300"><polygon points="1414.9,613.4 1545.8,652.0 1666.2,436.2 1544.9,403.7" fill="url(#dp)"/></mask></defs><polygon points="1399.0,612.3 1558.5,659.4 1558.5,681.0 1401.0,634.0" fill="#d2d2d2" stroke="#8e8e8e" stroke-width="0.9"/><polygon points="1558.5,659.4 1680.5,438.0 1680.5,457.0 1558.5,681.0" fill="#cacaca" stroke="#8e8e8e" stroke-width="0.9"/><polygon points="1401.0,622.0 1558.5,668.0 1558.5,681.0 1401.0,634.0" fill="url(#hat)"/><polygon points="1558.5,668.0 1680.5,446.0 1680.5,457.0 1558.5,681.0" fill="url(#hat)"/><polygon points="1621.7,545 1868.7,614.6 1617.2,576.2 1606.6,573.6 1621.7,565.5" fill="url(#spk)"/><polygon points="1399.0,612.3 1558.5,659.4 1680.5,438.0 1533.0,398.5" fill="#b9b2aa"/><g id="c3" shape-rendering="crispEdges"><path d="M1399 612.3 1558.5 659.4 1680.5 438 1533 398.5Z" fill="#458cfd"/><path d="M1399 612.3 1558.5 659.4 1680.5 438 1533 398.5Z" fill="#4099ff"/><path d="M1401.3 613 1556.1 658.7 1559.7 657.1 1679.5 439.9 1678.3 437.4 1535.2 399.1 1531.9 400.3 1400.4 610.1Z" fill="#38a5fb"/><path d="M1402.2 607.2 1401.7 607.9 1403.6 613.7 1553.7 658 1561 654.9 1678.4 441.8 1676.1 436.8 1537.3 399.7 1530.7 402.1Z" fill="#2fb2f4"/><path d="M1403.5 607.6 1405.9 614.3 1551.3 657.3 1557.6 654.9 1562.3 652.6 1677.4 443.7 1676.1 440.4 1673.9 436.2 1539.4 400.2 1533.7 402.2 1529.5 404 1403.1 605.7Z" fill="#27bee9"/><path d="M1405.4 608.2 1408.2 615 1549 656.6 1558.1 653.1 1563.5 650.2 1676.3 445.7 1675.2 442 1672.2 436.3 1671.8 435.7 1541.5 400.8 1533.3 403.6 1528.4 405.9 1404.5 603.5Z" fill="#1fc9dd"/><path d="M1407.3 608.7 1408.7 612.6 1410.4 615.7 1546.7 655.9 1551 654.6 1556.1 652.6 1559.8 650.9 1563.7 648.7 1564.9 647.8 1675.1 447.7 1674.3 443.7 1671.5 437.7 1669.6 435.1 1543.5 401.3 1535.1 404 1528.2 407.2 1527.1 407.9 1406 601.1 1406.4 605.7Z" fill="#1ad4d0"/><path d="M1409.1 609.3 1411.1 614.2 1412.8 616.4 1544.2 655.2 1547.7 654.5 1552 653 1556.3 651.2 1562.1 648.2 1566.3 645.2 1673.9 449.9 1673.4 445.3 1672.1 442 1669.1 436.4 1667.3 434.5 1545.8 401.9 1542.6 402.5 1534.9 405.1 1529.6 407.5 1525.8 410 1407.6 598.6 1407.6 603.9Z" fill="#18ddc2"/><path d="M1410.8 609.8 1411.9 612.9 1414.8 617 1542.2 654.6 1548.5 653.1 1557.2 649.6 1560.7 647.8 1568 642.2 1672.5 452.5 1672.7 451.1 1672.3 445.9 1671.4 443.3 1668.5 437.5 1665.4 434 1547.7 402.4 1542 403.6 1534.1 406.5 1530.9 407.9 1525.5 411.4 1524.2 412.5 1409.4 595.7 1409.1 597.3 1408.9 603.2 1409.5 606.1Z" fill="#1ae4b6"/><path d="M1412.3 610.2 1412.7 611.5 1416.7 617.5 1540.2 654 1549.3 651.8 1559.2 647.4 1565.2 643.1 1570 638.6 1670.8 455.5 1671.4 450.7 1670.9 445.5 1667.9 438.7 1663.6 433.5 1549.4 402.9 1541.3 404.7 1537.3 406.2 1532.2 408.2 1526.7 411.8 1522.4 415.5 1411.6 592.3 1410.4 597.7 1410.3 603.6Z" fill="#22ebaa"/><path d="M1413.8 610.6 1418.6 618.1 1538.3 653.4 1549.4 650.6 1557.8 647 1563.8 642.7 1568.8 638.1 1574.4 630.5 1667 462.5 1669.5 455.4 1670.1 450.4 1669.6 445.2 1667 439.4 1661.9 433 1551.1 403.4 1540.6 405.8 1533.5 408.6 1528 412.1 1523.5 415.9 1518.1 422.2 1416.5 584.4 1412.9 592.5 1411.7 598.1 1411.6 604Z" fill="#2ff19b"/><path d="M1415.5 611.1 1420.5 618.6 1536.4 652.9 1547.7 650.1 1556.4 646.6 1562.5 642.3 1567.4 637.7 1574.7 627.8 1581 617.7 1589.3 603.5 1658.2 478.1 1664.8 464.4 1668.3 455 1668.8 450.1 1668.3 444.8 1665.4 439 1660.1 432.5 1552.9 403.8 1543.6 405.8 1539.9 407 1534.8 408.9 1529.2 412.4 1524.7 416.2 1521.1 420.3 1514.7 428.8 1508.8 437.4 1432.8 558.4 1424.5 572.3 1418.9 582.4 1414.2 592.8 1413.1 598.5 1413 604.4Z" fill="#3ff68a"/><path d="M1417.2 611.6 1422.6 619.3 1534.2 652.2 1546 649.6 1551.6 647.6 1554.9 646.1 1561.1 641.9 1566 637.3 1569.9 632.4 1576.6 622.4 1582.7 612.3 1599.8 582.3 1634.5 519.5 1647.2 496.2 1659.3 473.2 1663.6 464 1667 454.7 1667.5 449.7 1667 444.5 1663.8 438.6 1658.1 432 1554.8 404.3 1544.2 406.5 1539.2 408.1 1536.1 409.3 1530.5 412.8 1525.9 416.6 1522.3 420.7 1515.9 429.1 1510 437.7 1490.1 468.8 1455.3 524.2 1440.5 548.2 1425.7 572.7 1420.2 582.8 1415.5 593.2 1414.4 598.8 1414.4 604.8 1415.3 607.5Z" fill="#52fa7a"/><path d="M1418.9 612.1 1422.4 617.3 1424.9 620 1531.8 651.5 1540.1 650.1 1548.2 647.7 1553.5 645.7 1559.7 641.5 1564.7 636.9 1568.6 632 1575.3 622 1581.4 611.9 1598.5 581.9 1633.2 519.2 1645.9 495.8 1658 472.9 1662.3 463.7 1665.8 454.3 1666.2 449.4 1665.6 444.1 1662.1 438.1 1658.4 433.7 1655.8 431.4 1557 404.9 1549.5 406.1 1542.3 408 1537.4 409.6 1531.7 413.1 1527.1 416.9 1523.5 421 1517.1 429.4 1511.2 438 1491.3 469.1 1456.6 524.6 1441.7 548.5 1427 573.1 1421.5 583.2 1416.8 593.6 1415.8 599.2 1415.8 605.2Z" fill="#65fd69"/><path d="M1420.6 612.6 1423.1 616.2 1427.5 620.7 1529.2 650.7 1536.9 649.8 1544.8 647.8 1552 645.3 1558.3 641.1 1563.3 636.5 1567.2 631.6 1574 621.6 1580.1 611.6 1597.2 581.6 1631.9 518.8 1644.7 495.5 1656.8 472.5 1661.1 463.3 1664.5 454 1664.9 449 1664.2 443.7 1660.5 437.7 1657.8 434.6 1653.4 430.7 1559.4 405.6 1552.4 406.3 1545.3 407.9 1538.8 410 1533 413.5 1528.4 417.2 1524.8 421.3 1518.3 429.7 1512.4 438.4 1492.5 469.4 1457.8 524.9 1443 548.9 1428.3 573.4 1422.8 583.5 1418.1 594 1417.1 599.6 1417.3 605.7Z" fill="#79fe59"/><path d="M1422.4 613.2 1423.8 615.2 1427.8 619.4 1430.9 621.7 1525.7 649.7 1530.3 649.7 1537.5 648.7 1540.6 648 1550.3 644.8 1556.9 640.6 1562 636.1 1565.9 631.2 1572.7 621.3 1578.8 611.2 1595.9 581.2 1630.7 518.5 1643.4 495.2 1655.5 472.2 1659.8 463 1663.2 453.6 1663.6 448.7 1662.7 443.3 1658.8 437.2 1657.3 435.5 1653.2 431.9 1650.2 429.9 1562.6 406.4 1558.4 406.4 1549.1 407.8 1540.3 410.4 1534.3 413.8 1529.6 417.6 1526 421.6 1519.6 430.1 1513.7 438.7 1493.8 469.8 1459.1 525.3 1444.2 549.2 1429.5 573.8 1424.1 583.9 1421.6 589.1 1419.5 594.4 1419.2 595.9 1418.5 600 1418.9 606.1Z" fill="#8bff4b"/><path d="M1424.1 613.7 1428.4 618.4 1430.7 620.1 1435.4 623 1521.1 648.4 1530.9 648.6 1538.8 647.5 1548.7 644.3 1555.5 640.2 1560.6 635.7 1564.5 630.8 1571.3 620.9 1577.5 610.8 1594.6 580.8 1629.4 518.1 1642.2 494.8 1654.3 471.8 1658.6 462.7 1661.9 453.3 1662.3 448.3 1661.1 442.9 1657.1 436.8 1652.7 432.8 1646 428.8 1566.7 407.5 1557.9 407.3 1550.7 408.2 1541.8 410.8 1535.2 414.4 1530.8 417.9 1527.2 422 1520.8 430.4 1514.9 439 1495 470.1 1460.3 525.6 1442.6 554.5 1428 579.2 1422.9 589.5 1420.8 594.8 1419.9 600.1 1420.5 606.6Z" fill="#9cfe40"/><path d="M1426.2 614.3 1429.1 617.3 1431.3 619.1 1440.3 624.5 1516.2 646.9 1528.1 647.7 1536.7 646.8 1547 643.8 1553.9 639.8 1559.3 635.3 1563.2 630.4 1570 620.5 1576.2 610.4 1593.3 580.5 1628.2 517.8 1640.9 494.5 1653 471.5 1657.3 462.3 1660.7 453 1660.8 447.9 1659.6 442.5 1656.2 437.5 1652.2 433.6 1650 432.1 1641.4 427.5 1571.2 408.7 1560.4 408.1 1557.3 408.2 1550.7 409.1 1543.3 411.2 1537 414.5 1533.6 417 1532.1 418.2 1528.4 422.3 1522 430.7 1504.7 457 1449.7 545.1 1435 569.6 1429.3 579.6 1424.2 589.8 1422.1 595.2 1421.4 600.9 1422.1 607.1 1425.2 612.9Z" fill="#a9fb39"/><path d="M1428.4 615 1431.9 618.1 1436.7 621.1 1441.7 624 1448.5 626.9 1509.6 644.8 1515.7 645.8 1525.4 646.5 1528.7 646.6 1534.4 646.2 1539.6 645.1 1545.3 643.3 1552.3 639.3 1557.8 634.9 1561.8 630 1568.7 620.1 1574.9 610.1 1586.4 590 1613.8 541.2 1639.7 494.1 1649.5 475.7 1656.1 462 1657.9 457.3 1659.3 452.6 1659.3 447.5 1658.6 444.2 1658 442.1 1655.6 438.5 1653 435.7 1649.5 433 1640.1 428 1633.7 425.5 1578.8 410.8 1574.5 410 1559.9 408.9 1554.7 409.3 1550 410.2 1544.8 411.6 1542.2 412.9 1538.4 414.9 1533.4 418.6 1529.7 422.6 1523.2 431.1 1505.9 457.3 1451 545.5 1436.2 569.9 1430.6 579.9 1425.5 590.2 1423.5 595.6 1422.9 601.3 1423.8 607.6 1425.9 611.7Z" fill="#b7f735"/><path d="M1430.9 615.7 1434.9 618.6 1442.3 623 1457 629 1470.9 633.5 1485.2 637.7 1499.7 641.6 1513.2 644.4 1526 645.4 1532.7 645.4 1540.3 643.8 1543.6 642.8 1550.7 638.8 1556.3 634.4 1560.4 629.6 1567.4 619.7 1573.6 609.7 1585.1 589.7 1612.5 540.8 1638.4 493.8 1648.2 475.4 1654.8 461.6 1656.5 457 1657.9 452.2 1657.8 447.1 1656.4 441.6 1655 439.6 1651.2 435.5 1649 433.9 1639.7 428.8 1632.2 425.9 1619.3 421.7 1599.6 416.3 1586.3 413.1 1574 410.8 1559.4 409.8 1556.2 410 1549.4 411.2 1546.4 412 1539.9 415.3 1534.8 419 1531 423 1524.4 431.4 1507.1 457.7 1452.2 545.8 1437.5 570.3 1431.9 580.3 1426.9 590.6 1425 596 1424.5 601.8 1425.4 608.1 1426.7 610.4Z" fill="#c3f134"/><path d="M1434.1 616.6 1442.9 622 1445.4 623.2 1457.6 628 1471.5 632.6 1485.7 636.8 1500.3 640.6 1513.7 643.4 1523.3 644.2 1529.9 644.5 1533.4 644.1 1541 642.6 1549.1 638.4 1554.7 634 1558.9 629.2 1565.9 619.3 1572.2 609.3 1580.9 594.3 1624.4 516.7 1646.9 475 1653.4 461.2 1655.1 456.6 1656.4 451.8 1656.3 446.7 1654.4 440.6 1650.6 436.5 1648.5 434.8 1639.2 429.7 1634.2 427.7 1625.3 424.5 1612.3 420.7 1592.5 415.5 1576.2 412.1 1570.6 411.3 1560 410.7 1555.6 411 1552.2 411.5 1547.9 412.5 1544.6 414.1 1541.4 415.7 1536.2 419.4 1532.4 423.4 1525.8 431.8 1519.8 440.4 1508.3 458 1453.5 546.2 1438.9 570.7 1433.3 580.7 1428.4 591.1 1426.5 596.4 1426 602.3 1427.1 608.6 1427.4 609.2 1431.1 614Z" fill="#d0ea34"/><path d="M1438.2 617.8 1446 622.2 1458.1 627 1465.1 629.4 1493.5 637.8 1500.8 639.6 1514.3 642.4 1523.9 643.2 1530.5 643.3 1537.8 642.2 1541.9 640.9 1547.5 637.9 1553.2 633.5 1557.3 628.7 1564.4 618.9 1570.7 608.8 1579.5 593.8 1623 516.3 1645.5 474.7 1652 460.9 1653.7 456.2 1654.9 451.4 1654.8 446.3 1653 440.7 1650.1 437.5 1645.7 434.3 1638.7 430.5 1633.7 428.5 1624.8 425.3 1611.8 421.5 1592 416.3 1578.5 413.4 1573 412.4 1567.2 411.9 1558.2 411.7 1555 412 1549.7 412.9 1547.9 413.6 1542.8 416.1 1537.6 419.7 1533.8 423.8 1527.1 432.1 1521.2 440.8 1509.7 458.4 1454.9 546.6 1440.3 571.1 1434.7 581.2 1429.9 591.5 1428 596.9 1427.6 602.7 1429 609.1 1431.8 612.8 1433.9 614.8Z" fill="#dbe236"/><path d="M1442.6 619.1 1446.6 621.3 1458.7 626.1 1472.7 630.6 1486.9 634.8 1501.4 638.6 1514.9 641.4 1519.9 641.9 1531.2 642.1 1537.9 641.1 1545.9 637.4 1551.6 633.1 1555.8 628.3 1562.9 618.4 1569.2 608.4 1578 593.4 1621.5 515.9 1644.1 474.3 1650.5 460.5 1652.2 455.8 1653.5 451 1653.3 445.9 1652.7 443.7 1651.1 440.2 1647.4 436.8 1642.9 433.9 1638.2 431.3 1630.7 428.4 1624.4 426.2 1611.3 422.3 1591.5 417.1 1578 414.2 1567.9 412.8 1557.6 412.7 1554.4 413 1551.6 413.5 1546.9 415.3 1544.3 416.5 1539.1 420.1 1535.2 424.1 1528.5 432.5 1522.5 441.1 1511.1 458.8 1453.4 551.9 1441.7 571.5 1433.6 586.7 1431.4 591.9 1429.5 597.3 1429.2 603.2 1429.6 605.6 1431 609.7 1432.6 611.7 1434.6 613.7Z" fill="#e5d938"/><path d="M1448.9 621 1459.3 625.1 1466.2 627.4 1487.4 633.9 1502 637.7 1515.5 640.4 1528.5 640.9 1535.7 640.5 1544.2 636.9 1550 632.6 1554.3 627.8 1561.4 618 1567.7 608 1576.5 593 1620.1 515.5 1642.7 473.9 1649.1 460.1 1650.8 455.4 1652 450.6 1651.8 445.5 1649 439.7 1646.8 437.8 1637.7 432.2 1633.7 430.5 1623.9 427 1597.7 419.6 1584.3 416.4 1574.7 414.6 1569.1 413.8 1563.1 413.6 1557 413.6 1553.8 414 1545.8 416.9 1540.5 420.5 1536.6 424.5 1529.9 432.9 1523.9 441.5 1512.5 459.1 1454.8 552.3 1443.2 571.9 1435.1 587.1 1432.9 592.4 1431.1 597.8 1430.8 603.7 1433.2 610.3 1435.4 612.5 1440 615.8 1444.7 618.9Z" fill="#eecf3a"/><path d="M1461.8 624.8 1473.8 628.7 1495.2 634.8 1510 638.2 1519.3 639.6 1533 639.7 1536.5 638.7 1542.3 636.4 1548.5 632.1 1552.7 627.4 1559.9 617.5 1566.2 607.6 1575.1 592.6 1618.7 515.1 1641.3 473.5 1647.7 459.7 1649.3 455 1650.5 450.2 1650 445 1648.1 441 1646.5 439 1637.2 433.2 1623.4 427.8 1597.2 420.4 1583.8 417.2 1577 415.9 1568.5 414.8 1556.1 414.7 1552.9 415.4 1547.6 417.4 1541.9 420.9 1538 424.9 1534.5 429 1528.2 437.5 1513.8 459.5 1502.5 477.5 1453.3 557.6 1441.8 577.4 1436.6 587.6 1434.4 592.8 1432.6 598.2 1432.7 604.2 1434.4 608.7 1435.8 611.1 1440.6 614.7 1447.9 619.2Z" fill="#f5c53a"/><path d="M1439.4 612.2 1446.1 616.7 1448.6 618.1 1460.5 623.1 1474.4 627.7 1488.6 631.9 1503.1 635.6 1510.6 637.1 1519.9 638.5 1529.9 638.5 1533.5 638 1540.3 635.8 1546.8 631.7 1551.2 626.9 1558.4 617.1 1564.8 607.1 1573.6 592.1 1617.3 514.7 1639.8 473.1 1646.2 459.3 1647.9 454.6 1649 449.8 1648.1 444.5 1647.2 442.6 1645.4 440.2 1643.1 438.1 1636.6 434.1 1622.9 428.7 1609.9 424.8 1596.7 421.2 1583.3 418.1 1570.9 415.9 1559.4 415.5 1555.6 416.1 1551.9 417 1549.4 417.9 1543.4 421.3 1539.4 425.3 1532.7 433.6 1526.7 442.3 1515.2 459.9 1469.4 533.8 1457.6 553.1 1443.3 577.8 1438.1 588 1435.9 593.3 1434.2 598.7 1434.7 604.8 1435.5 606.9 1437.1 609.6Z" fill="#faba39"/><path d="M1443.3 613.3 1449.2 617 1461.2 622 1468.1 624.4 1489.2 630.8 1503.8 634.5 1511.3 636 1520.5 637.3 1525.3 637.4 1530.9 636.8 1534.6 636.2 1538.2 635.1 1545 631.1 1549.6 626.5 1553.5 621.6 1560.2 611.7 1569.2 596.7 1589.1 562.2 1615.9 514.4 1638.4 472.7 1642.9 463.6 1646.4 454.2 1647.3 449.3 1646.2 444.3 1644.6 441.8 1639.4 437.1 1633.7 433.9 1628.7 431.9 1622.4 429.6 1609.4 425.6 1596.2 422.1 1582.8 419 1570.3 416.9 1563 416.5 1554.6 417.5 1551.4 418.4 1545.1 421.8 1539.6 427.2 1534.1 434 1528 442.6 1516.6 460.3 1470.8 534.2 1459.1 553.5 1444.7 578.2 1439.6 588.4 1437.4 593.7 1436 599.2 1436.7 605.4 1438.2 607.9Z" fill="#fdae35"/><path d="M1447.4 614.5 1449.9 615.9 1461.8 620.9 1475.7 625.6 1497.1 631.7 1504.4 633.5 1514.9 635.4 1521.2 636.2 1535.6 634.4 1540.1 632.3 1543 630.6 1547.7 625.9 1551.8 621.1 1555.4 616.2 1561.8 606.3 1573.6 586.3 1587.6 561.8 1627.3 490.7 1639.3 467.8 1643.2 458.5 1644.7 453.8 1645.5 448.9 1645 446.5 1643.7 443.3 1635.6 436 1628.2 432.8 1621.8 430.5 1608.8 426.5 1595.6 423 1582.2 419.9 1566.8 417.5 1553.7 419 1546.9 422.2 1542.6 426.1 1535.5 434.4 1529.4 443 1518 460.7 1469.3 539.4 1457.6 558.8 1445.6 579.7 1441.2 588.9 1439.2 594.2 1437.9 599.8 1438.2 602.5 1439.3 606.1 1443.2 610.5Z" fill="#fea130"/><path d="M1454.7 616.7 1462.4 619.9 1469.3 622.3 1490.5 628.7 1505 632.4 1513.8 634 1518.8 634.6 1522.1 634.6 1532.1 633.4 1537 631.8 1541 630 1541.8 629.3 1545.9 625.4 1550.2 620.3 1556.9 610.8 1563.1 600.8 1572 585.9 1586.1 561.3 1613 513.5 1628.2 485.7 1637.6 467.3 1641.5 458 1642.9 453.3 1643.6 448.3 1642.5 445.5 1640.5 442.4 1634.7 437.4 1632.5 436 1628.6 434.2 1621.3 431.4 1608.3 427.4 1595.1 423.9 1581.7 420.8 1574.8 419.6 1569.1 418.9 1566 418.9 1556.9 419.9 1552.4 421.2 1548.8 422.7 1544.3 426.6 1540.5 430.7 1534 439.1 1516.6 465.5 1491.1 506.7 1462 554.3 1450.6 574.1 1445.3 584.2 1443 589.4 1441.1 594.8 1439.9 600.4 1440.8 603.6 1442.7 607.1 1448.4 612.9 1450.7 614.6Z" fill="#fe932a"/><path d="M1468.9 620.8 1491.1 627.7 1499.4 629.8 1505.7 631.2 1519.7 632.9 1523.1 632.9 1528.4 632.3 1538.5 629.3 1545 623.7 1548.1 620.1 1555.2 610.2 1570.3 585.4 1611.3 513.1 1624.1 489.8 1633.7 471.5 1638 462.2 1639.8 457.6 1641 452.8 1641.3 447.7 1637 441.5 1633.9 438.8 1631.7 437.4 1620.7 432.4 1615.3 430.6 1607.8 428.3 1587.9 423.2 1581.1 421.8 1574 420.8 1568.2 420.3 1560.3 420.8 1551.1 423.3 1546.1 427.1 1542.2 431.1 1538.8 435.3 1532.6 443.9 1521.1 461.5 1489.8 511.8 1466.6 550 1458 564.6 1449.6 579.6 1444.8 590 1443 595.3 1442.3 601.1 1446.3 608.2 1449.4 611.3 1451.7 612.9 1463.1 618.7Z" fill="#fc8423"/><path d="M1450 609.3 1452.6 611.3 1457.6 614 1464.1 617.1 1470.8 619.7 1477.7 622.1 1491.9 626.2 1506.6 629.6 1520.6 631.3 1524.6 631.2 1535.4 628.3 1541.5 624.1 1546 619.4 1550.6 613.7 1556.6 604.8 1568.6 584.9 1609.6 512.6 1622.4 489.4 1632 471 1636.2 461.8 1637.8 457 1638.8 451.9 1638.3 446.9 1633.5 440.5 1630.9 438.8 1626.1 436.4 1620 433.7 1613.6 431.6 1593.9 426 1580.3 423.1 1567.4 421.7 1563.8 421.8 1554 424.2 1548.3 427.7 1544.2 431.7 1540.6 435.8 1537.3 440 1522.7 462 1479.9 531.2 1465.4 555.3 1454.1 575.1 1448.9 585.3 1446.8 590.5 1445.3 596.3 1445.4 602Z" fill="#f9751d"/><path d="M1455.9 611 1465 615.6 1471.8 618.2 1478.6 620.5 1492.8 624.7 1507.5 628.1 1518.6 629.4 1521.7 629.5 1525.3 629 1531.9 627.3 1538.4 623.2 1543.5 618.7 1547.6 614 1551.2 609.1 1566.7 584.4 1580.9 559.9 1607.9 512.1 1620.6 488.9 1630.1 470.5 1634.7 459.2 1635.4 456.4 1635.9 451.7 1635.1 446 1632.1 442.1 1630 440.3 1627.9 439 1619.2 435.1 1606.3 430.8 1586.4 425.7 1579.5 424.4 1572.4 423.5 1566.5 423.2 1563.2 423.6 1557.1 425 1551.2 428.5 1546.5 432.3 1542.7 436.3 1536.2 444.9 1524.5 462.4 1513.1 480.5 1470.1 550.9 1458.8 570.7 1453.5 580.8 1451.1 585.9 1449.3 591.3 1448.3 596.9 1448.6 601.6 1448.8 603 1451.7 607.5 1453.7 609.5Z" fill="#f46617"/><path d="M1465.4 613.8 1479.5 619 1493.7 623.2 1508.4 626.5 1516.4 627.1 1523 627.2 1528.4 626.3 1535.1 622.2 1540.4 617.8 1544.8 613.1 1552.1 603.5 1564.5 583.7 1592.5 535.2 1618.5 488.3 1627.8 469.8 1631.4 460.4 1632.5 455.6 1632.8 450.5 1631.8 445.2 1630.9 444.1 1628.9 442.2 1626.7 440.8 1618.4 436.4 1605.6 432.1 1592.3 428.5 1578.2 425.6 1565.3 425.1 1560.4 425.9 1554.2 429.3 1549.4 433.1 1545.3 437.1 1538.5 445.5 1530.4 457.1 1512.3 485.6 1483.7 532.3 1469.3 556.4 1458.4 576.4 1456 581.5 1453.9 586.7 1452.3 592.1 1451.6 597.8 1452.2 604 1455 607.3Z" fill="#ef5811"/><path d="M1456.4 605.2 1461 608.4 1467.1 612 1480.6 617.3 1494.7 621.5 1509.6 624.5 1517.6 625 1524.3 625 1528.6 623.1 1531.8 621.3 1537.2 616.9 1541.7 612.3 1549.2 602.6 1561.8 583 1589.9 534.5 1615.9 487.6 1625 469.1 1628.5 459.6 1629.5 454.8 1629.7 449.7 1629.2 447.2 1627.8 444.1 1617.4 438.2 1604.7 433.6 1591.5 430 1577.7 427.4 1564.2 427 1560.2 428.5 1557.3 430.1 1552.3 433.9 1548.2 437.8 1541.2 446.2 1529.1 463.7 1500.7 509.4 1472 557.2 1461.3 577.2 1456.9 587.6 1455.5 593.1 1454.9 598.8 1455.2 601.7Z" fill="#e84b0c"/><path d="M1464.4 607.5 1468.4 609.9 1475 612.8 1481.8 615.3 1495.9 619.4 1510.8 622.4 1516.1 622.7 1522.9 621.5 1528 620.1 1531.7 617.8 1534 615.9 1538.5 611.3 1546.1 601.7 1561.8 577.2 1573.3 557.7 1597.8 514.7 1614.9 483.1 1622.1 468.3 1623.9 463.6 1625.5 458.8 1626.5 454 1626.5 451.8 1625.7 447.9 1622 443.6 1620.2 442 1616.4 439.9 1603.7 435.3 1590.5 431.7 1576.6 429.2 1571.8 429 1562 430.6 1557.4 433.1 1555.3 434.7 1551.1 438.6 1544.1 447 1534.9 460.1 1517.6 487 1480.6 548.3 1474.9 558 1464.3 578.1 1460 588.5 1458.6 594 1458.4 596.4 1459 600.9 1462.6 605.7Z" fill="#e14109"/><path d="M1479.2 611.9 1482.9 613.3 1497.1 617.4 1504.6 618.8 1512.5 619.4 1521.2 618.2 1530.1 614.8 1535.3 610.4 1539.5 605.7 1543.1 600.9 1555.9 581.3 1570.4 556.9 1602.7 499.9 1610.2 486 1619.2 467.5 1622.1 459.6 1622.4 458 1622.8 452.9 1619.7 447 1614.9 442.5 1609 439.4 1602.7 437 1589.4 433.5 1585.6 432.7 1575.1 431.7 1567.1 432.8 1559 435.6 1554.1 439.4 1550.3 443.5 1546.9 447.8 1534.7 465.3 1520.4 487.8 1506.3 511 1492 534.6 1477.8 558.9 1467.3 578.9 1465 584.1 1463.2 589.4 1462.4 595.1 1465.1 601.6 1470.1 607Z" fill="#d83706"/><path d="M1475.1 604.7 1478.6 606.7 1485 609.8 1499.1 613.9 1506.8 615 1511.3 615.3 1515 615.2 1523.2 612.8 1530.2 608.9 1536.4 603.8 1539.7 599.9 1546.5 590.1 1552.7 581.1 1556 575.6 1581.4 532.1 1594.8 508.5 1607.7 484.7 1615.9 466.6 1617.4 461.8 1617.6 456.7 1616.7 452.7 1616.3 451.2 1612.8 446.1 1607.1 442.7 1600.9 440.1 1587.7 436.5 1580.5 435.5 1573 435.3 1565.4 437.4 1558.9 440.7 1553.9 444.5 1550.1 448.6 1537.4 466 1517.5 497.8 1494.7 535.4 1483.4 554.8 1480.3 560.3 1473.1 574.8 1470.6 579.9 1469 584.3 1468.2 590.9 1469.3 597.1 1472.6 602.8Z" fill="#ce2d04"/><path d="M1479 599.9 1481.5 601.8 1487.6 605.4 1501.7 609.5 1509.7 610.1 1513.4 609.9 1518.5 609.1 1523.2 606.9 1529.2 602.7 1534 598.2 1548.9 579.3 1564.1 555.1 1591.3 507.5 1603.4 484.2 1610.6 465.1 1611.3 460.2 1611 454.9 1609.8 451.4 1607 448.7 1604.6 447 1598.7 443.9 1585.4 440.3 1578 439.8 1574.6 439.9 1569.8 440.6 1565.4 442.5 1559.9 446.2 1557.6 448.1 1555.4 450.1 1551.8 454.3 1541.4 467.1 1526.5 489.5 1498.2 536.4 1484.7 560.8 1476.2 581.5 1475.1 587 1475.1 592.9 1476.2 596.8Z" fill="#c32503"/><path d="M1487.6 596.5 1491.2 599.3 1505.3 603.4 1510.6 603.2 1513.9 602.7 1521.2 600.4 1524.5 598.8 1527.4 596.3 1543 577.6 1558.5 553.5 1572.5 529.6 1585.8 506 1597.8 482.6 1602.7 468.2 1604.2 463.4 1604.5 460.5 1603.7 458.1 1600.9 453.4 1599 451.7 1595.6 449.2 1582.2 445.6 1577.3 445.7 1574.2 446.2 1567.4 448.2 1564.4 449.6 1561.7 451.8 1547 468.6 1531.9 491 1517.8 514.2 1503.7 537.9 1490.5 562.5 1486.5 572.9 1482.8 583.4 1482.4 586.6 1483 589.3 1485.8 594.6Z" fill="#b71d02"/><path d="M1496.2 587.3 1497.3 589.1 1511.3 593.1 1513.9 592.4 1523 587.1 1531.5 580 1536.3 575.6 1543 566.8 1552.7 551.8 1566.7 528 1580.1 504.4 1587.6 489.7 1591.2 480.8 1592.5 470.6 1592.7 467.4 1592.4 465.4 1591.3 459.9 1590.3 458.3 1576.9 454.6 1574.5 455.3 1565.9 460 1558 466.4 1553.5 470.4 1547.1 478.6 1537.6 492.6 1523.5 515.8 1509.5 539.6 1501.3 554.9 1497.2 564.4 1496.2 569.9 1495.1 579Z" fill="#a91601"/><path d="M1511.5 562.8 1510.2 567.2 1524.2 571.2 1531.8 562.9 1539.4 553.7 1543 549.1 1557.7 525.4 1570.6 501.8 1574.3 492.1 1578.6 478.2 1565.1 474.5 1554.2 486.5 1547.1 495.2 1532.5 518.3 1519.1 542.3 1515 552.4Z" fill="#9b0f01"/></g><polygon points="1418.4,613.2 1543.5,650.1 1662.5,437.2 1546.5,406.1" fill="#b8b0a8" opacity="0.31" filter="url(#bl)"/><polygon points="1399.0,612.3 1558.5,659.4 1680.5,438.0 1533.0,398.5" fill="#c4c8c0" opacity="0.2"/><use href="#c3" mask="url(#dm)"/><polygon points="1426.5,610.8 1540.1,644.2 1655.2,439.3 1549.6,410.9" fill="url(#lp)"/><path d="M1421.5 610.8 L1538.5 646.0 L1657.8 426.2 L1551.0 398.4ZM1540.7 396.3 L1410.8 611.4 L1548.6 652.3 L1669.4 432.5M1399.0 612.3 L1410.8 611.4 L1421.5 610.8M1558.5 659.4 L1548.6 652.3 L1538.5 646.0M1533.0 397.8 L1540.7 396.3 L1547.1 395.3 L1556.5 395.0 L1658.5 423.6 L1669.4 432.5 L1680.3 437.6M1549.4 402.4 L1655.6 431.2M1556.5 395.0 L1551.0 398.4 L1549.4 402.4M1658.5 423.6 L1657.8 426.2 L1655.6 431.2" fill="none" stroke="#a62408" stroke-width="0.9"/><path d="M1399 612.3L1558.5 659.4" fill="none" stroke="#a62408" stroke-width="0.8"/><path d="M1542.5 520.5h4.5l2 1.2l-2 1.2h-4.5z" fill="none" stroke="#e8c828" stroke-width="1"/><path d="M1450.0 269.0 L1884.5 380.4 L1667.7 849.7 L1157.0 685.0 Z" fill="none" stroke="#a09208" stroke-width="1.9"/><path d="M1450.0 269.0 L1884.5 380.4 L1667.7 849.7 L1157.0 685.0 Z" fill="none" stroke="#ece8a8" stroke-width="0.55"/><path d="M1152 683.5L1213 597" stroke="#1010ff" stroke-width="1.1"/><polygon points="1219.6,587 1208.2,594 1214.6,600.6" fill="#1010ff"/><path d="M1152 683.5L1268 721.2" stroke="#ff1010" stroke-width="1.3"/><polygon points="1281.4,725 1266.6,715.4 1263.6,725.6" fill="#ff1010"/><path d="M1152 683.5L1165.6 766" stroke="#108018" stroke-width="1.1"/><polygon points="1167.4,776.4 1161,765.6 1170.2,764.2" fill="#108018"/><text x="1228.5" y="575.5" font-size="10.5" font-family="Liberation Sans, sans-serif" fill="#1010ff">Y</text><text x="1298.5" y="731" font-size="10.5" font-family="Liberation Sans, sans-serif" fill="#ff1010">X</text><text x="1168" y="790" font-size="10.5" font-style="italic" font-family="Liberation Sans, sans-serif" fill="#108018">Z</text><polygon points="1821.8,190.4 1861.7,201 1850.2,222.1 1809.8,213.5" fill="#bad8b4" stroke="#9a9aa0" stroke-width="0.8"/><polygon points="1809.8,213.5 1850.2,222.1 1846.3,256.7 1805.5,247.1" fill="#c2c2e2" stroke="#9a9aa0" stroke-width="0.8"/><polygon points="1850.2,222.1 1861.7,201 1859.8,236.5 1846.3,256.7" fill="#c8a6a4" stroke="#9a9aa0" stroke-width="0.8"/><path d="M1794 214.4L1808.4 217.8M1849.2 227.9L1873.8 233.7" stroke="#ff6a6a" stroke-width="1.2"/><path d="M1808.4 217.8L1849.2 227.9" stroke="#f0b0c0" stroke-width="1" opacity="0.7"/><path d="M1837.7 190.4L1835.3 220.2" stroke="#6cc46c" stroke-width="1.4"/><path d="M1835.3 220.2L1833 257" stroke="#a8c8c0" stroke-width="0.8" opacity="0.6"/><path d="M1833.8 221.2L1821.8 246.6" stroke="#6a6aff" stroke-width="1.3"/><text transform="translate(1812.4 233.4) rotate(12.5)" font-size="10.5" font-weight="bold" font-family="Liberation Serif, serif" fill="#5a5a66" letter-spacing="0.8">Front</text><text transform="translate(1827.6 199.6) rotate(14) scale(1,0.62)" font-size="9.5" font-weight="bold" font-family="Liberation Serif, serif" fill="#7a8a7a">Top</text><text transform="translate(1852.6 240) rotate(-62) scale(0.55,1)" font-size="8" font-family="Liberation Serif, serif" fill="#7a6a6a">Right</text><text x="1848.4" y="197.2" font-size="9.5" font-family="Liberation Sans, sans-serif" fill="#6a6aff">Y</text><text x="1880.6" y="235.6" font-size="9.5" font-family="Liberation Sans, sans-serif" fill="#ff6a6a">X</text><text x="1829" y="263.4" font-size="9.5" font-family="Liberation Sans, sans-serif" fill="#6cc46c">Z</text></svg>
<div class="b " style="left:0px;top:1020px;width:1920px;height:20px;background:#fff;"></div>
<span id="t81" class="t rb" style="left:4px;top:1025px;letter-spacing:-0.738px;">Ready</span>
<div class="b " style="left:1531px;top:1022px;width:98px;height:16.8px;background:#cde6f7;"></div>
<span id="t82" class="t rb" style="left:1539.2px;top:1025px;letter-spacing:-0.612px;">MAX DATATIPS</span>
<div class="b " style="left:1631px;top:1022px;width:35.5px;height:16.8px;background:#cde6f7;"></div>
<span id="t83" class="t rb" style="left:1634.0px;top:1025px;letter-spacing:-0.797px;">SNAP</span>
<span id="t84" class="t rb" style="left:1670.4px;top:1025px;letter-spacing:-1.125px;color:#9a9a9a;">GRID</span>
<div class="b " style="left:1699px;top:1022px;width:46px;height:16.8px;background:#cde6f7;"></div>
<span id="t85" class="t rb" style="left:1702.5px;top:1025px;letter-spacing:-0.825px;">ORTHO</span>
<span id="t86" class="t rb" style="left:1748.6px;top:1025px;letter-spacing:-0.803px;color:#9a9a9a;">OSNAP</span>
</div>
</body></html>
